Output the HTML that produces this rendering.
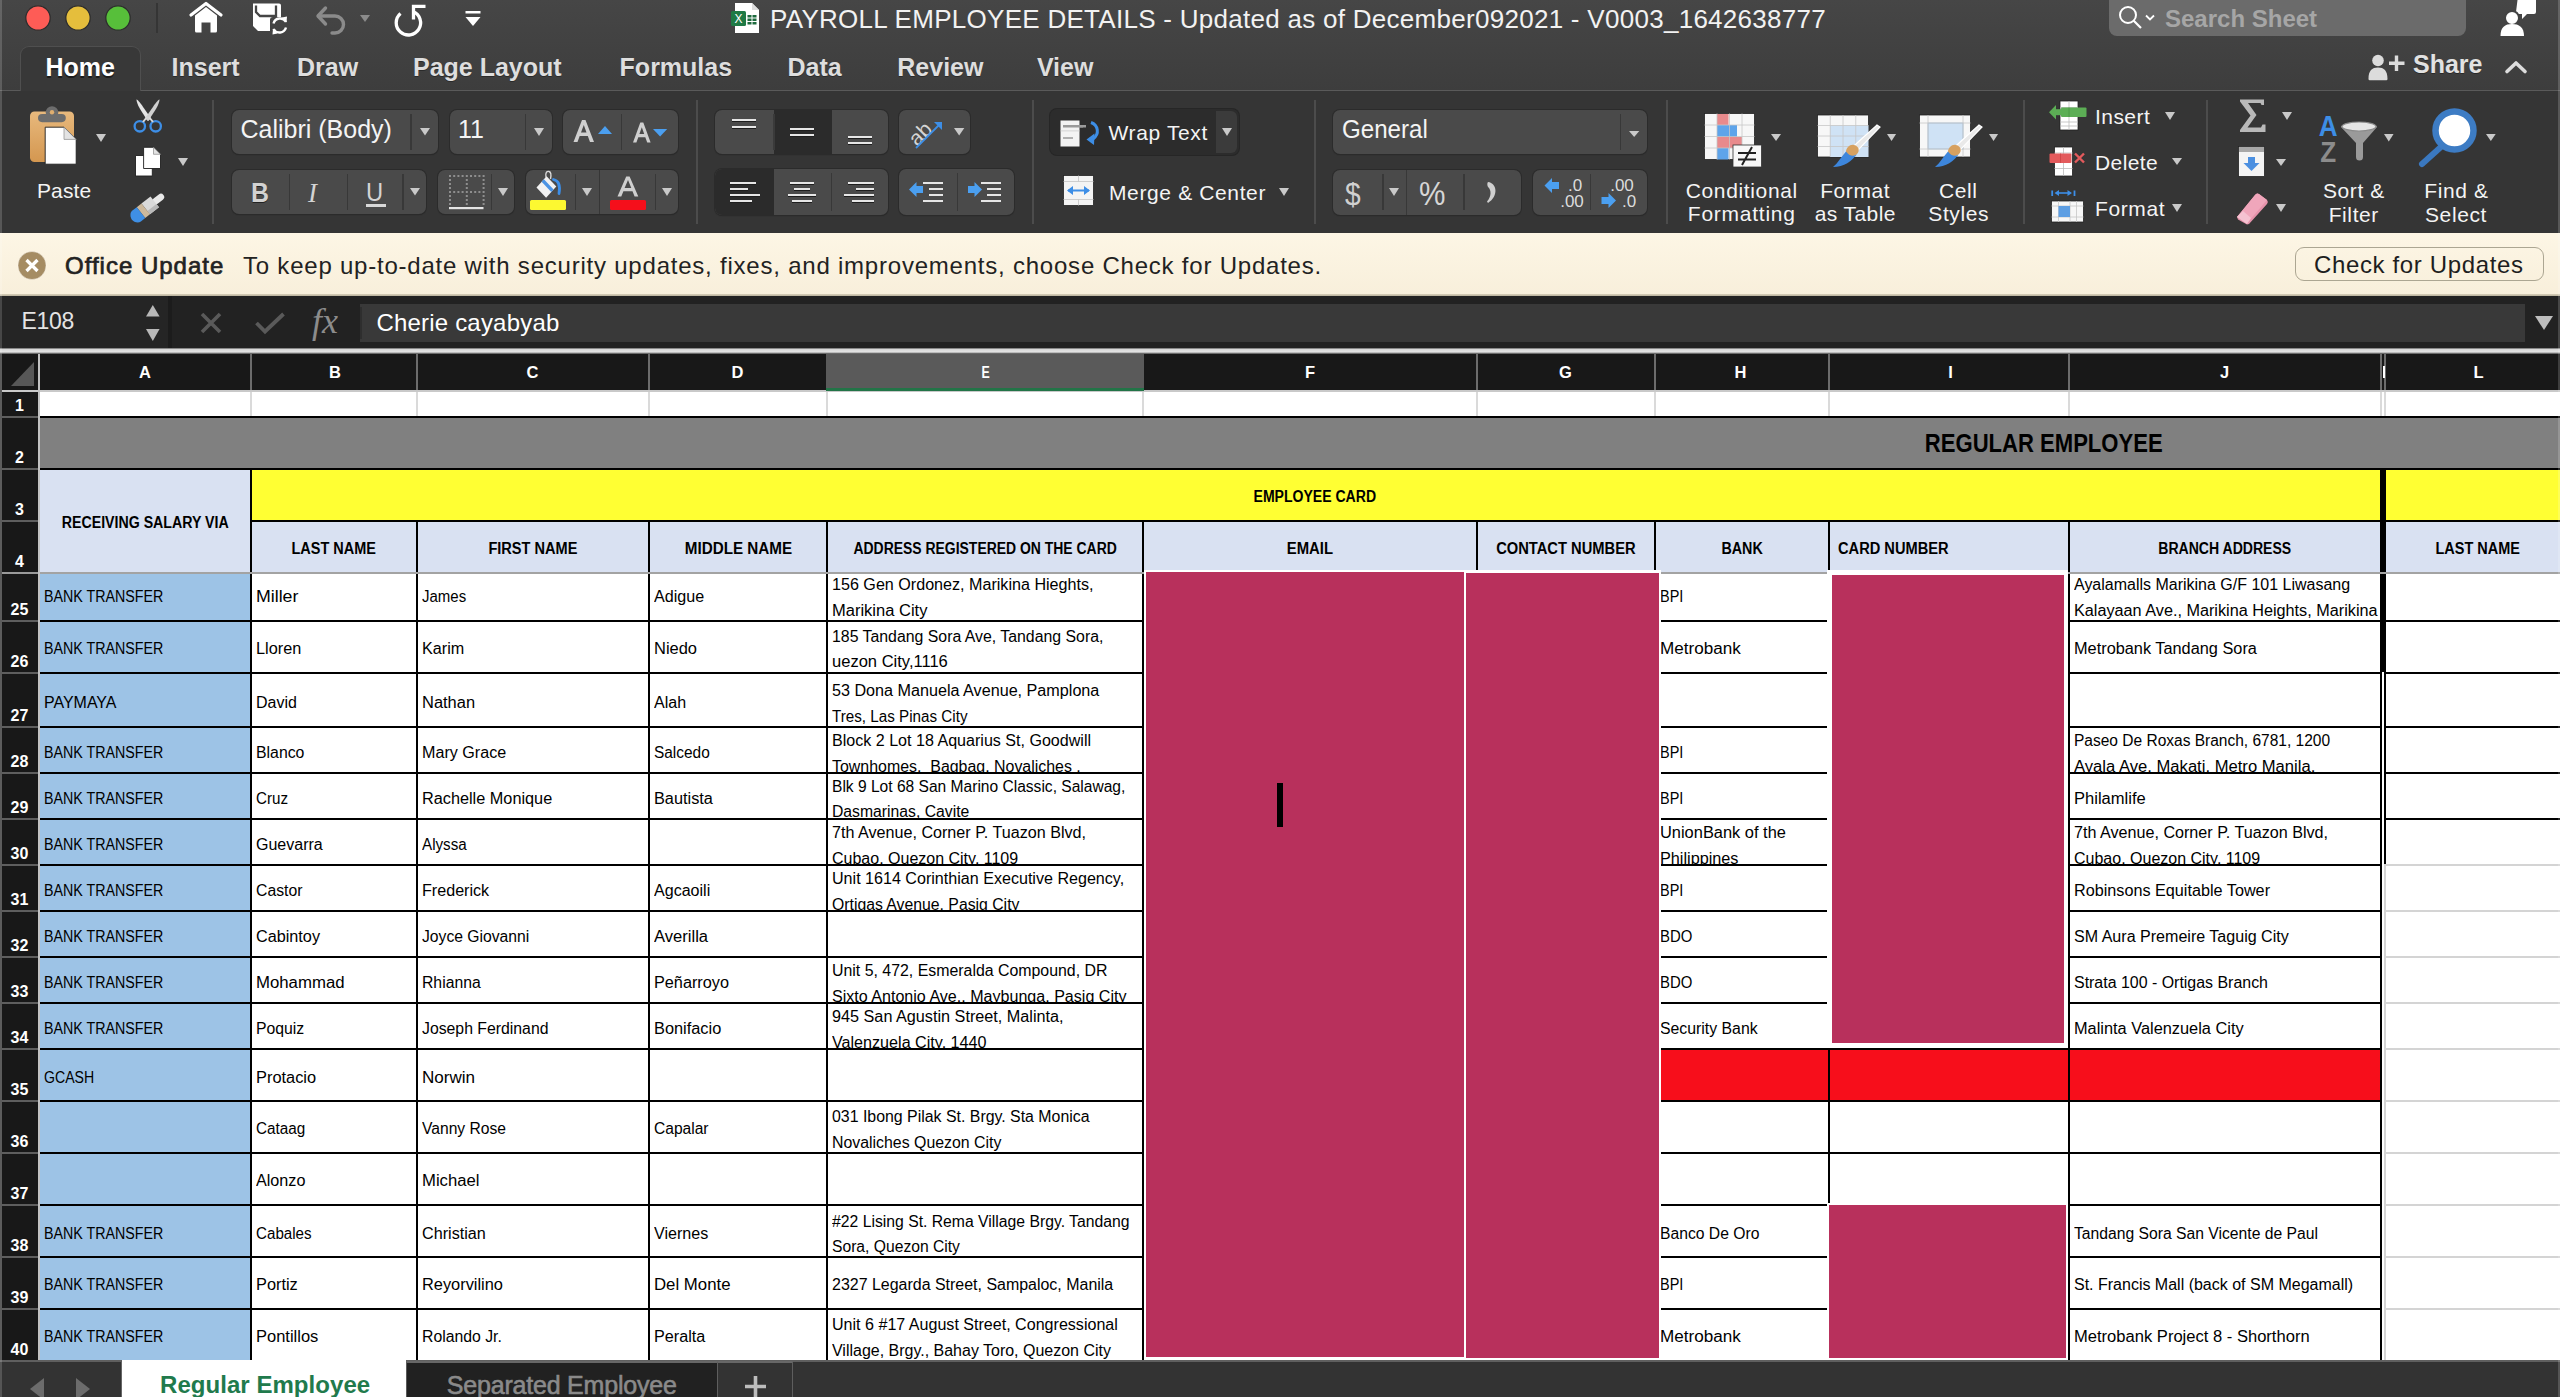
<!DOCTYPE html><html><head><meta charset="utf-8"><title>Excel</title><style>html,body{margin:0;padding:0;width:2560px;height:1397px;overflow:hidden;background:#333;}body{position:relative;font-family:"Liberation Sans",sans-serif;}body div,body svg{position:absolute;}svg{overflow:visible;}</style></head><body><div style="left:0px;top:0px;width:2560px;height:91px;background:linear-gradient(#464646,#3d3d3d);"></div>
<svg style="left:25px;top:5px;" width="26" height="26" viewBox="0 0 26 26"><circle cx="13" cy="13" r="12.2" fill="#fe5c56" stroke="#2e2e2e" stroke-width="1.3"/></svg>
<svg style="left:65px;top:5px;" width="26" height="26" viewBox="0 0 26 26"><circle cx="13" cy="13" r="12.2" fill="#e5be3c" stroke="#2e2e2e" stroke-width="1.3"/></svg>
<svg style="left:105px;top:5px;" width="26" height="26" viewBox="0 0 26 26"><circle cx="13" cy="13" r="12.2" fill="#57bf3a" stroke="#2e2e2e" stroke-width="1.3"/></svg>
<div style="left:156px;top:3px;width:2px;height:30px;background:#353535;"></div>
<svg style="left:188px;top:1px;" width="36" height="33" viewBox="0 0 36 33"><path d="M3 14 L18 2.5 L33 14" fill="none" stroke="#fff" stroke-width="3.2" stroke-linejoin="round" stroke-linecap="round"/><path d="M7 14.5 L18 6 L29 14.5 V30 a1.5 1.5 0 0 1 -1.5 1.5 H22.5 V21.5 H13.5 V31.5 H8.5 a1.5 1.5 0 0 1 -1.5 -1.5Z" fill="#fff"/></svg>
<svg style="left:250px;top:1px;" width="38" height="36" viewBox="0 0 38 36"><path d="M3 2.5 H29 a2 2 0 0 1 2 2 V16 H23 a3 3 0 0 0 -3 3 V30 H8 L3 25 Z" fill="#fff"/><path d="M6 4.5 V11 L10 15 H26 V4.5" fill="none" stroke="#454545" stroke-width="2.3"/><g fill="none" stroke="#fff" stroke-width="2.4"><path d="M23.5 22.5 a6.8 6.8 0 0 1 12.5 -1.5"/><path d="M36 26.5 a6.8 6.8 0 0 1 -12.5 1.5"/></g><path d="M32 16.5 L36.5 21.5 L37 15.5Z" fill="#fff"/><path d="M27.5 32.5 L23 27.5 L22.5 33.5Z" fill="#fff"/></svg>
<svg style="left:314px;top:3px;" width="36" height="32" viewBox="0 0 36 32"><path d="M4.5 13 H21 a8.5 8.5 0 0 1 0 17 H18" fill="none" stroke="#8b8b8b" stroke-width="3.4" stroke-linecap="round"/><path d="M11.5 5 L4 13 L11.5 21" fill="none" stroke="#8b8b8b" stroke-width="3.4" stroke-linecap="round" stroke-linejoin="round"/></svg>
<svg style="left:359.5px;top:15px;" width="10.0" height="7" viewBox="0 0 10.0 7"><path d="M0 0H10.0L5.0 7Z" fill="#8b8b8b"/></svg>
<svg style="left:394px;top:2px;" width="34" height="34" viewBox="0 0 34 34"><path d="M6.5 11.5 A12.2 12.2 0 1 0 19 9.5" fill="none" stroke="#fff" stroke-width="3.3"/><path d="M19.5 17.5 V4.3 H31.5" fill="none" stroke="#fff" stroke-width="3.3"/></svg>
<svg style="left:465px;top:11px;" width="17" height="17" viewBox="0 0 17 17"><rect x="0.5" y="0" width="15" height="2.5" fill="#fff"/><path d="M0.5 6 H15.5 L8 15Z" fill="#fff"/></svg>
<svg style="left:731px;top:2px;" width="29" height="32" viewBox="0 0 29 32"><path d="M4 1 H21 L28 8 V31 H4Z" fill="#fff"/><path d="M21 1 V8 H28" fill="#ddd"/><rect x="0" y="9" width="15" height="15" rx="1.5" fill="#1f7a45"/><text x="7.5" y="21" font-family="Liberation Sans" font-size="12" fill="#fff" text-anchor="middle">X</text><g fill="#1e6b3e"><rect x="16.5" y="13" width="4" height="2.5"/><rect x="21.5" y="13" width="4" height="2.5"/><rect x="16.5" y="16.5" width="4" height="2.5"/><rect x="21.5" y="16.5" width="4" height="2.5"/><rect x="16.5" y="20" width="4" height="2.5"/><rect x="21.5" y="20" width="4" height="2.5"/></g></svg>
<div style="left:770px;top:5.99px;font-family:'Liberation Sans', sans-serif;font-size:26px;line-height:26px;font-weight:400;color:#f2f2f2;letter-spacing:0.28px;white-space:pre;"><span style="display:inline-block;white-space:pre;">PAYROLL EMPLOYEE DETAILS - Updated as of December092021 - V0003_1642638777</span></div>
<div style="left:2109px;top:-8px;width:357px;height:44px;background:#6b6b6b;border-radius:8px;"></div>
<svg style="left:2118px;top:5px;" width="40" height="26" viewBox="0 0 40 26"><circle cx="10" cy="10" r="8" fill="none" stroke="#fff" stroke-width="2"/><path d="M15.5 15.5 L23 23" stroke="#fff" stroke-width="2.2"/><path d="M28 10.5 L32 14.5 L36 10.5" fill="none" stroke="#fff" stroke-width="1.8"/></svg>
<div style="left:2165px;top:7.18px;font-family:'Liberation Sans', sans-serif;font-size:24px;line-height:24px;font-weight:700;color:#a6a6a6;letter-spacing:0px;white-space:pre;"><span style="display:inline-block;white-space:pre;">Search Sheet</span></div>
<svg style="left:2500px;top:0px;" width="38" height="37" viewBox="0 0 38 37"><path d="M18 -4 H34 a2 2 0 0 1 2 2 V12 a2 2 0 0 1 -2 2 H27 L22 19 V14 H18 a2 2 0 0 1 -2 -2 Z" fill="#fff"/><circle cx="12" cy="18" r="7" fill="#fff" stroke="#434343" stroke-width="2"/><path d="M0.5 36 C0.5 27 5 24 12 24 C19 24 24 27 24 36Z" fill="#fff"/></svg>
<div style="left:0px;top:90px;width:2560px;height:1px;background:#5a5a5a;"></div>
<div style="left:20px;top:46px;width:121px;height:46px;background:#383838;border:1px solid #4f4f4f;border-bottom:none;border-radius:9px 9px 0 0;box-sizing:border-box;"></div>
<div style="left:45.5px;top:54.54px;font-family:'Liberation Sans', sans-serif;font-size:25px;line-height:25px;font-weight:700;color:#ffffff;letter-spacing:0px;white-space:pre;text-shadow:0 1.5px 0 #1c1c1c;"><span style="display:inline-block;white-space:pre;">Home</span></div>
<div style="left:171.6px;top:55.04px;font-family:'Liberation Sans', sans-serif;font-size:25px;line-height:25px;font-weight:700;color:#dedede;letter-spacing:0px;white-space:pre;text-shadow:0 1px 0 #2a2a2a;"><span style="display:inline-block;white-space:pre;">Insert</span></div>
<div style="left:297px;top:55.04px;font-family:'Liberation Sans', sans-serif;font-size:25px;line-height:25px;font-weight:700;color:#dedede;letter-spacing:0px;white-space:pre;text-shadow:0 1px 0 #2a2a2a;"><span style="display:inline-block;white-space:pre;">Draw</span></div>
<div style="left:413px;top:55.04px;font-family:'Liberation Sans', sans-serif;font-size:25px;line-height:25px;font-weight:700;color:#dedede;letter-spacing:0px;white-space:pre;text-shadow:0 1px 0 #2a2a2a;"><span style="display:inline-block;white-space:pre;">Page Layout</span></div>
<div style="left:619.6px;top:55.04px;font-family:'Liberation Sans', sans-serif;font-size:25px;line-height:25px;font-weight:700;color:#dedede;letter-spacing:0px;white-space:pre;text-shadow:0 1px 0 #2a2a2a;"><span style="display:inline-block;white-space:pre;">Formulas</span></div>
<div style="left:787.5px;top:55.04px;font-family:'Liberation Sans', sans-serif;font-size:25px;line-height:25px;font-weight:700;color:#dedede;letter-spacing:0px;white-space:pre;text-shadow:0 1px 0 #2a2a2a;"><span style="display:inline-block;white-space:pre;">Data</span></div>
<div style="left:897.3px;top:55.04px;font-family:'Liberation Sans', sans-serif;font-size:25px;line-height:25px;font-weight:700;color:#dedede;letter-spacing:0px;white-space:pre;text-shadow:0 1px 0 #2a2a2a;"><span style="display:inline-block;white-space:pre;">Review</span></div>
<div style="left:1036.9px;top:55.04px;font-family:'Liberation Sans', sans-serif;font-size:25px;line-height:25px;font-weight:700;color:#dedede;letter-spacing:0px;white-space:pre;text-shadow:0 1px 0 #2a2a2a;"><span style="display:inline-block;white-space:pre;">View</span></div>
<svg style="left:2368px;top:53px;" width="38" height="28" viewBox="0 0 38 28"><circle cx="10" cy="7.5" r="5.8" fill="#dcdcdc"/><path d="M0.5 26 a1.2 1.2 0 0 0 1.2 1.2 H18.3 a1.2 1.2 0 0 0 1.2 -1.2 C19.5 17.5 16 14.5 10 14.5 C4 14.5 0.5 17.5 0.5 26Z" fill="#dcdcdc"/><path d="M28.5 2.5 V18 M21 10.2 H36.5" stroke="#dcdcdc" stroke-width="3.4"/></svg>
<div style="left:2413px;top:51.84px;font-family:'Liberation Sans', sans-serif;font-size:25px;line-height:25px;font-weight:700;color:#e2e2e2;letter-spacing:0px;white-space:pre;text-shadow:0 1px 0 #2a2a2a;"><span style="display:inline-block;white-space:pre;">Share</span></div>
<svg style="left:2504px;top:59px;" width="24" height="16" viewBox="0 0 24 16"><path d="M3 12.5 L12 4 L21 12.5" fill="none" stroke="#dcdcdc" stroke-width="3.6" stroke-linecap="round" stroke-linejoin="round"/></svg>
<div style="left:0px;top:91px;width:2560px;height:142px;background:#353535;"></div>
<div style="left:212px;top:100px;width:2px;height:124px;background:#4c4c4c;"></div>
<div style="left:696px;top:100px;width:2px;height:124px;background:#4c4c4c;"></div>
<div style="left:1032px;top:100px;width:2px;height:124px;background:#4c4c4c;"></div>
<div style="left:1314px;top:100px;width:2px;height:124px;background:#4c4c4c;"></div>
<div style="left:1666px;top:100px;width:2px;height:124px;background:#4c4c4c;"></div>
<div style="left:2023px;top:100px;width:2px;height:124px;background:#4c4c4c;"></div>
<div style="left:2206px;top:100px;width:2px;height:124px;background:#4c4c4c;"></div>
<svg style="left:28px;top:100px;" width="52" height="66" viewBox="0 0 52 66"><linearGradient id="cg" x1="0" y1="0" x2="0" y2="1"><stop offset="0" stop-color="#e8b97d"/><stop offset="1" stop-color="#d49750"/></linearGradient><rect x="2" y="11.4" width="44" height="50.6" rx="4.5" fill="url(#cg)"/><circle cx="24" cy="12.5" r="6.3" fill="#6d6d6d"/><rect x="10" y="14" width="27.8" height="8.2" rx="4.1" fill="#6d6d6d"/><circle cx="24" cy="12.3" r="2.2" fill="#dfae6f"/><path d="M17.2 27.2 H36 L48.2 39.4 V64.2 H17.2Z" fill="#fff" stroke="#1e1e1e" stroke-width="0.9"/><path d="M36 27.2 V39.4 H48.2Z" fill="#e3e3e3" stroke="#8a8a8a" stroke-width="0.7"/></svg>
<div style="left:37px;top:180.22px;font-family:'Liberation Sans', sans-serif;font-size:21px;line-height:21px;font-weight:400;color:#f4f4f4;letter-spacing:0.1px;white-space:pre;"><span style="display:inline-block;white-space:pre;">Paste</span></div>
<svg style="left:96px;top:134px;" width="10" height="8" viewBox="0 0 10 8"><path d="M0 0H10L5.0 8Z" fill="#c9c9c9"/></svg>
<svg style="left:132px;top:98px;" width="32" height="36" viewBox="0 0 32 36"><path d="M4.5 1.5 C6 2 8 4 19 20.5 L16 23 C9 13 4.5 6 4.5 1.5Z" fill="#e4e4e4"/><path d="M27.5 1.5 C26 2 24 4 13 20.5 L16 23 C23 13 27.5 6 27.5 1.5Z" fill="#d0d0d0"/><circle cx="7.8" cy="28.3" r="5.2" fill="none" stroke="#3d8ee6" stroke-width="2.3"/><circle cx="23.7" cy="28.3" r="5.2" fill="none" stroke="#3d8ee6" stroke-width="2.3"/><path d="M11 24 L15 19 M21 24 L17 19" stroke="#d8d8d8" stroke-width="2"/></svg>
<svg style="left:134px;top:145px;" width="30" height="34" viewBox="0 0 30 34"><path d="M1.5 10.5 H18.3 V31 H1.5Z" fill="#fff" stroke="#1e1e1e" stroke-width="0.9"/><path d="M9.6 2.3 H19.5 L26.5 9.3 V23.5 H9.6Z" fill="#fff" stroke="#1e1e1e" stroke-width="0.9"/><path d="M19.5 2.3 V9.3 H26.5Z" fill="#e3e3e3" stroke="#8a8a8a" stroke-width="0.7"/></svg>
<svg style="left:178px;top:158px;" width="10" height="8" viewBox="0 0 10 8"><path d="M0 0H10L5.0 8Z" fill="#c9c9c9"/></svg>
<svg style="left:127px;top:188px;" width="40" height="40" viewBox="0 0 40 40"><g transform="translate(20.5 19.5) rotate(52) scale(0.92)"><rect x="-3.6" y="-22" width="7.2" height="14" rx="3.6" fill="#e9e9e9"/><path d="M-7.5 -10 H7.5 V2.5 H-7.5Z" fill="#dadada"/><path d="M3 -10 H7.5 V2.5 H3Z" fill="#b9b9b9"/><path d="M-7.5 2.5 H7.5 V9 H-7.5Z" fill="#cdb99c"/><path d="M-7.5 9 H7.5 V15 C7.5 19 3 21.5 0 21.5 C-3 21.5 -7.5 19 -7.5 15Z" fill="#3f8fe5"/></g></svg>
<div style="left:231.5px;top:109.5px;width:206.5px;height:44.5px;background:#4a4a4a;border-radius:7px;box-shadow:0 0 0 1px #2b2b2b, 0 1px 1px #262626;"></div>
<div style="left:410px;top:114px;width:1.5px;height:36px;background:#383838;"></div>
<svg style="left:419.5px;top:128px;" width="10.0" height="7.5" viewBox="0 0 10.0 7.5"><path d="M0 0H10.0L5.0 7.5Z" fill="#c9c9c9"/></svg>
<div style="left:240.5px;top:117.34px;font-family:'Liberation Sans', sans-serif;font-size:25px;line-height:25px;font-weight:400;color:#f4f4f4;letter-spacing:0px;white-space:pre;"><span style="display:inline-block;white-space:pre;">Calibri (Body)</span></div>
<div style="left:449.6px;top:109.7px;width:102.39999999999998px;height:44.7px;background:#4a4a4a;border-radius:7px;box-shadow:0 0 0 1px #2b2b2b, 0 1px 1px #262626;"></div>
<div style="left:524.5px;top:114px;width:1.5px;height:36px;background:#383838;"></div>
<svg style="left:534px;top:128px;" width="10" height="8" viewBox="0 0 10 8"><path d="M0 0H10L5.0 8Z" fill="#c9c9c9"/></svg>
<div style="left:458px;top:116.84px;font-family:'Liberation Sans', sans-serif;font-size:25px;line-height:25px;font-weight:400;color:#f4f4f4;letter-spacing:0px;white-space:pre;"><span style="display:inline-block;white-space:pre;">11</span></div>
<div style="left:563.4px;top:109.7px;width:114.80000000000007px;height:44.7px;background:#4a4a4a;border-radius:7px;box-shadow:0 0 0 1px #2b2b2b, 0 1px 1px #262626;"></div>
<div style="left:620.5px;top:114px;width:1.5px;height:36px;background:#383838;"></div>
<svg style="left:572px;top:118px;" width="24" height="26" viewBox="0 0 24 26"><path d="M1.5 24 L10 2 H13.5 L22 24 H18 L15.8 18 H7.7 L5.5 24Z M9 14.5 H14.5 L11.8 7Z" fill="#cfcfcf"/></svg>
<svg style="left:598px;top:126px;" width="14" height="8" viewBox="0 0 14 8"><path d="M0 8H14L7.0 0Z" fill="#4b9ff0"/></svg>
<svg style="left:632px;top:121px;" width="20" height="23" viewBox="0 0 20 23"><path d="M1 21.5 L8.3 1.5 H11.3 L18.6 21.5 H15.2 L13.3 16.2 H6.3 L4.4 21.5Z M7.4 13 H12.2 L9.8 6.3Z" fill="#cfcfcf"/></svg>
<svg style="left:652.8px;top:129px;" width="14.200000000000045" height="7.599999999999994" viewBox="0 0 14.200000000000045 7.599999999999994"><path d="M0 0H14.200000000000045L7.100000000000023 7.599999999999994Z" fill="#4b9ff0"/></svg>
<div style="left:231.5px;top:169.5px;width:194.5px;height:44.5px;background:#4a4a4a;border-radius:7px;box-shadow:0 0 0 1px #2b2b2b, 0 1px 1px #262626;"></div>
<div style="left:288.5px;top:174px;width:1.5px;height:36px;background:#383838;"></div>
<div style="left:346.5px;top:174px;width:1.5px;height:36px;background:#383838;"></div>
<div style="left:402px;top:174px;width:1.5px;height:36px;background:#383838;"></div>
<div style="left:251px;top:179.64px;font-family:'Liberation Sans', sans-serif;font-size:27px;line-height:27px;font-weight:700;color:#d2d2d2;letter-spacing:0px;white-space:pre;text-shadow:0 1px 0 #222;"><span style="display:inline-block;white-space:pre;transform:scaleX(0.92);transform-origin:left 50%;">B</span></div>
<div style="left:308px;top:179.64px;font-family:'Liberation Serif', serif;font-size:27px;line-height:27px;font-weight:400;color:#d4d4d4;letter-spacing:0px;white-space:pre;font-style:italic;"><span style="display:inline-block;white-space:pre;">I</span></div>
<div style="left:365.5px;top:180.34px;font-family:'Liberation Sans', sans-serif;font-size:25px;line-height:25px;font-weight:400;color:#d4d4d4;letter-spacing:0px;white-space:pre;"><span style="display:inline-block;white-space:pre;transform:scaleX(0.95);transform-origin:left 50%;">U</span></div>
<div style="left:366px;top:204px;width:20px;height:3px;background:#d8d8d8;"></div>
<svg style="left:409.5px;top:188px;" width="10.0" height="7.5" viewBox="0 0 10.0 7.5"><path d="M0 0H10.0L5.0 7.5Z" fill="#c9c9c9"/></svg>
<div style="left:438px;top:170px;width:76px;height:44px;background:#4a4a4a;border-radius:7px;box-shadow:0 0 0 1px #2b2b2b, 0 1px 1px #262626;"></div>
<svg style="left:449px;top:175px;" width="36" height="36" viewBox="0 0 36 36"><g fill="#8e8e8e"><rect x="0.0" y="0" width="2" height="2"/><rect x="4.2" y="0" width="2" height="2"/><rect x="8.4" y="0" width="2" height="2"/><rect x="12.600000000000001" y="0" width="2" height="2"/><rect x="16.8" y="0" width="2" height="2"/><rect x="21.0" y="0" width="2" height="2"/><rect x="25.200000000000003" y="0" width="2" height="2"/><rect x="29.400000000000002" y="0" width="2" height="2"/><rect x="33.6" y="0" width="2" height="2"/><rect x="0.0" y="4" width="2" height="2"/><rect x="16.8" y="4" width="2" height="2"/><rect x="33.6" y="4" width="2" height="2"/><rect x="0.0" y="8" width="2" height="2"/><rect x="16.8" y="8" width="2" height="2"/><rect x="33.6" y="8" width="2" height="2"/><rect x="0.0" y="12" width="2" height="2"/><rect x="16.8" y="12" width="2" height="2"/><rect x="33.6" y="12" width="2" height="2"/><rect x="0.0" y="16" width="2" height="2"/><rect x="4.2" y="16" width="2" height="2"/><rect x="8.4" y="16" width="2" height="2"/><rect x="12.600000000000001" y="16" width="2" height="2"/><rect x="16.8" y="16" width="2" height="2"/><rect x="21.0" y="16" width="2" height="2"/><rect x="25.200000000000003" y="16" width="2" height="2"/><rect x="29.400000000000002" y="16" width="2" height="2"/><rect x="33.6" y="16" width="2" height="2"/><rect x="0.0" y="20" width="2" height="2"/><rect x="16.8" y="20" width="2" height="2"/><rect x="33.6" y="20" width="2" height="2"/><rect x="0.0" y="24" width="2" height="2"/><rect x="16.8" y="24" width="2" height="2"/><rect x="33.6" y="24" width="2" height="2"/><rect x="0.0" y="28" width="2" height="2"/><rect x="16.8" y="28" width="2" height="2"/><rect x="33.6" y="28" width="2" height="2"/></g><rect x="0" y="32" width="34.5" height="2.2" fill="#e4e4e4"/></svg>
<div style="left:490.5px;top:174px;width:1.5px;height:36px;background:#383838;"></div>
<svg style="left:498px;top:188px;" width="10" height="8" viewBox="0 0 10 8"><path d="M0 0H10L5.0 8Z" fill="#c9c9c9"/></svg>
<div style="left:525.8px;top:170px;width:152.4000000000001px;height:44px;background:#4a4a4a;border-radius:7px;box-shadow:0 0 0 1px #2b2b2b, 0 1px 1px #262626;"></div>
<svg style="left:532px;top:170px;" width="32" height="30" viewBox="0 0 32 30"><path d="M14 7.5 C13 2.5 15 1 17 1.5 C19 2 19.5 4 18.5 9" fill="none" stroke="#dadada" stroke-width="1.4"/><path d="M4.5 17.5 L14.6 6.3 L24.3 16.6 L14.1 27.8Z" fill="#f2f2f2"/><path d="M9.6 11.7 L11.9 9.2 L21.6 19.5 L19.3 22Z" fill="#4b93e4"/><path d="M21.5 9.5 C26.5 10.5 28.5 15 27 23.5" fill="none" stroke="#3d8ee6" stroke-width="2.8" stroke-linecap="round"/></svg>
<div style="left:530px;top:200px;width:36px;height:10px;background:#fcf831;border-radius:1.5px;"></div>
<div style="left:574.8px;top:174px;width:1.5px;height:36px;background:#383838;"></div>
<svg style="left:582px;top:188px;" width="10" height="8" viewBox="0 0 10 8"><path d="M0 0H10L5.0 8Z" fill="#c9c9c9"/></svg>
<div style="left:598.5px;top:170px;width:1.5px;height:44px;background:#363636;"></div>
<svg style="left:616px;top:175px;" width="24" height="23" viewBox="0 0 24 23"><path d="M1.5 21.5 L10.2 1.5 H13.6 L22.3 21.5 H18.6 L16.5 16.3 H7.4 L5.3 21.5Z M8.6 13 H15.3 L12 5Z" fill="#cfcfcf"/></svg>
<div style="left:610px;top:200px;width:35.700000000000045px;height:10px;background:#f50f1b;border-radius:1.5px;"></div>
<div style="left:654.5px;top:174px;width:1.5px;height:36px;background:#383838;"></div>
<svg style="left:662px;top:188px;" width="10" height="8" viewBox="0 0 10 8"><path d="M0 0H10L5.0 8Z" fill="#c9c9c9"/></svg>
<div style="left:715px;top:109.6px;width:173px;height:44.400000000000006px;background:#4a4a4a;border-radius:7px;box-shadow:0 0 0 1px #2b2b2b, 0 1px 1px #262626;"></div>
<div style="left:774px;top:109.6px;width:58px;height:44.400000000000006px;background:#2b2b2b;"></div>
<div style="left:773px;top:114px;width:1.5px;height:36px;background:#3a3a3a;"></div>
<div style="left:732px;top:119.2px;width:24px;height:2.0px;background:#e6e6e6;box-shadow:0 1px 0 #1e1e1e;"></div>
<div style="left:732px;top:125.9px;width:24px;height:2.0px;background:#e6e6e6;box-shadow:0 1px 0 #1e1e1e;"></div>
<div style="left:790px;top:127.9px;width:24px;height:2.0px;background:#e6e6e6;box-shadow:0 1px 0 #1e1e1e;"></div>
<div style="left:790px;top:133.8px;width:24px;height:2.0px;background:#e6e6e6;box-shadow:0 1px 0 #1e1e1e;"></div>
<div style="left:848px;top:135.8px;width:24px;height:2.0px;background:#e6e6e6;box-shadow:0 1px 0 #1e1e1e;"></div>
<div style="left:848px;top:141.8px;width:24px;height:2.0px;background:#e6e6e6;box-shadow:0 1px 0 #1e1e1e;"></div>
<div style="left:899px;top:109.6px;width:71px;height:44.400000000000006px;background:#4a4a4a;border-radius:7px;box-shadow:0 0 0 1px #2b2b2b, 0 1px 1px #262626;"></div>
<svg style="left:910px;top:116px;" width="38" height="34" viewBox="0 0 38 34"><text x="0" y="0" font-family="Liberation Sans" font-size="21" fill="#d5d5d5" transform="translate(7 31) rotate(-45)">ab</text><path d="M6 32 L30 8" stroke="#3d8ee6" stroke-width="1.8"/><path d="M24 6 H32 V14Z" fill="#3d8ee6"/></svg>
<svg style="left:953.7px;top:128px;" width="10.299999999999955" height="7.5" viewBox="0 0 10.299999999999955 7.5"><path d="M0 0H10.299999999999955L5.149999999999977 7.5Z" fill="#c9c9c9"/></svg>
<div style="left:714.6px;top:168.7px;width:173.39999999999998px;height:46.30000000000001px;background:#4a4a4a;border-radius:7px;box-shadow:0 0 0 1px #2b2b2b, 0 1px 1px #262626;"></div>
<div style="left:714.6px;top:168.7px;width:59.39999999999998px;height:46.30000000000001px;background:#2b2b2b;border-radius:7px 0 0 7px;"></div>
<div style="left:830.5px;top:173px;width:1.5px;height:38px;background:#383838;"></div>
<div style="left:730px;top:181.6px;width:26px;height:2.0px;background:#e6e6e6;box-shadow:0 1px 0 #1e1e1e;"></div>
<div style="left:730px;top:187.6px;width:18px;height:2.0px;background:#e6e6e6;box-shadow:0 1px 0 #1e1e1e;"></div>
<div style="left:730px;top:193.6px;width:30px;height:2.0px;background:#e6e6e6;box-shadow:0 1px 0 #1e1e1e;"></div>
<div style="left:730px;top:199.8px;width:22px;height:2.0px;background:#e6e6e6;box-shadow:0 1px 0 #1e1e1e;"></div>
<div style="left:790.0px;top:181.6px;width:24.0px;height:2.0px;background:#e6e6e6;box-shadow:0 1px 0 #1e1e1e;"></div>
<div style="left:794.0px;top:187.6px;width:16.0px;height:2.0px;background:#e6e6e6;box-shadow:0 1px 0 #1e1e1e;"></div>
<div style="left:788.0px;top:193.6px;width:28.0px;height:2.0px;background:#e6e6e6;box-shadow:0 1px 0 #1e1e1e;"></div>
<div style="left:792.0px;top:199.8px;width:20.0px;height:2.0px;background:#e6e6e6;box-shadow:0 1px 0 #1e1e1e;"></div>
<div style="left:848px;top:181.6px;width:26px;height:2.0px;background:#e6e6e6;box-shadow:0 1px 0 #1e1e1e;"></div>
<div style="left:856px;top:187.6px;width:18px;height:2.0px;background:#e6e6e6;box-shadow:0 1px 0 #1e1e1e;"></div>
<div style="left:844px;top:193.6px;width:30px;height:2.0px;background:#e6e6e6;box-shadow:0 1px 0 #1e1e1e;"></div>
<div style="left:852px;top:199.8px;width:22px;height:2.0px;background:#e6e6e6;box-shadow:0 1px 0 #1e1e1e;"></div>
<div style="left:899px;top:168.7px;width:115px;height:46.30000000000001px;background:#4a4a4a;border-radius:7px;box-shadow:0 0 0 1px #2b2b2b, 0 1px 1px #262626;"></div>
<div style="left:956.5px;top:173px;width:1.5px;height:38px;background:#383838;"></div>
<svg style="left:908px;top:178px;" width="38" height="26" viewBox="0 0 38 26"><path d="M1 11.5 L8.5 4 V8 H15 V15 H8.5 V19Z" fill="#4b9ff0"/><g fill="#e6e6e6"><rect x="15" y="4" width="20" height="2"/><rect x="21" y="10" width="14" height="2"/><rect x="21" y="16" width="14" height="2"/><rect x="15" y="22" width="20" height="2"/></g></svg>
<svg style="left:966px;top:178px;" width="38" height="26" viewBox="0 0 38 26"><path d="M16 11.5 L8.5 4 V8 H2 V15 H8.5 V19Z" fill="#4b9ff0"/><g fill="#e6e6e6"><rect x="15" y="4" width="20" height="2"/><rect x="21" y="10" width="14" height="2"/><rect x="21" y="16" width="14" height="2"/><rect x="15" y="22" width="20" height="2"/></g></svg>
<div style="left:1050.4px;top:108.7px;width:188.2px;height:46.5px;background:#2c2c2c;border-radius:7px;box-shadow:0 0 0 1px #262626;"></div>
<div style="left:1215.6px;top:111px;width:21.40000000000009px;height:42px;background:#3b3b3b;border-radius:0 6px 6px 0;"></div>
<svg style="left:1060px;top:120px;" width="42" height="28" viewBox="0 0 42 28"><rect x="0.5" y="0.5" width="19" height="26" fill="#f3f3f3"/><rect x="3" y="5" width="20" height="2.5" fill="#9a9a9a"/><rect x="20" y="5" width="6" height="2.5" fill="#9a9a9a"/><rect x="3" y="17" width="10" height="2" fill="#b0b0b0"/><rect x="0.5" y="10.5" width="19" height="0.8" fill="#ccc"/><path d="M31 2.5 C38 5 40 14 33 19" fill="none" stroke="#3d8ee6" stroke-width="3"/><path d="M26.5 19.5 L34.5 13.5 L34 25Z" fill="#3d8ee6"/></svg>
<div style="left:1108.4px;top:122.12px;font-family:'Liberation Sans', sans-serif;font-size:21px;line-height:21px;font-weight:400;color:#f4f4f4;letter-spacing:0.65px;white-space:pre;"><span style="display:inline-block;white-space:pre;">Wrap Text</span></div>
<svg style="left:1222px;top:128px;" width="10" height="8" viewBox="0 0 10 8"><path d="M0 0H10L5.0 8Z" fill="#c9c9c9"/></svg>
<svg style="left:1063px;top:175px;" width="32" height="33" viewBox="0 0 32 33"><rect x="0.5" y="0.5" width="30" height="30" fill="#f4f4f4" stroke="#222" stroke-width="0.8"/><path d="M0.5 6.5 H30.5 M0.5 24.5 H30.5 M15.5 0.5 V6.5 M15.5 24.5 V30.5" stroke="#c4c4c4" stroke-width="0.8"/><path d="M5 15.5 H26" stroke="#3d8ee6" stroke-width="2"/><path d="M4 15.5 L10 11 V20Z M27 15.5 L21 11 V20Z" fill="#3d8ee6"/></svg>
<div style="left:1109px;top:181.52px;font-family:'Liberation Sans', sans-serif;font-size:21px;line-height:21px;font-weight:400;color:#f4f4f4;letter-spacing:0.63px;white-space:pre;"><span style="display:inline-block;white-space:pre;">Merge &amp; Center</span></div>
<svg style="left:1279px;top:188px;" width="10" height="8" viewBox="0 0 10 8"><path d="M0 0H10L5.0 8Z" fill="#c9c9c9"/></svg>
<div style="left:1332.7px;top:109.8px;width:314.29999999999995px;height:44.2px;background:#4a4a4a;border-radius:7px;box-shadow:0 0 0 1px #2b2b2b, 0 1px 1px #262626;"></div>
<div style="left:1619.5px;top:114px;width:1.5px;height:36px;background:#383838;"></div>
<svg style="left:1628.7px;top:131px;" width="10.299999999999955" height="6" viewBox="0 0 10.299999999999955 6"><path d="M0 0H10.299999999999955L5.149999999999977 6Z" fill="#c9c9c9"/></svg>
<div style="left:1341.8px;top:116.74px;font-family:'Liberation Sans', sans-serif;font-size:25px;line-height:25px;font-weight:400;color:#f4f4f4;letter-spacing:0px;white-space:pre;"><span style="display:inline-block;white-space:pre;transform:scaleX(0.965);transform-origin:left 50%;">General</span></div>
<div style="left:1332.7px;top:169.5px;width:188.29999999999995px;height:45.0px;background:#4a4a4a;border-radius:7px;box-shadow:0 0 0 1px #2b2b2b, 0 1px 1px #262626;"></div>
<div style="left:1345px;top:177.91px;font-family:'Liberation Sans', sans-serif;font-size:32px;line-height:32px;font-weight:400;color:#d0d0d0;letter-spacing:0px;white-space:pre;"><span style="display:inline-block;white-space:pre;transform:scaleX(0.88);transform-origin:left 50%;">$</span></div>
<div style="left:1382px;top:174px;width:1.5px;height:36px;background:#383838;"></div>
<svg style="left:1389px;top:188px;" width="10" height="8" viewBox="0 0 10 8"><path d="M0 0H10L5.0 8Z" fill="#c9c9c9"/></svg>
<div style="left:1405.5px;top:169.5px;width:1.5px;height:45.0px;background:#383838;"></div>
<div style="left:1419px;top:177.07px;font-family:'Liberation Sans', sans-serif;font-size:33px;line-height:33px;font-weight:400;color:#d6d6d6;letter-spacing:0px;white-space:pre;"><span style="display:inline-block;white-space:pre;transform:scaleX(0.9);transform-origin:left 50%;">%</span></div>
<div style="left:1463.2px;top:174px;width:1.5px;height:36px;background:#383838;"></div>
<svg style="left:1484px;top:180px;" width="18" height="26" viewBox="0 0 18 26"><path d="M4 2 C13 3 15 16 4 23 L3 21.5 C8 16 7 10 4.5 7.5 C3 6 3 3 4 2Z" fill="#d0d0d0"/></svg>
<div style="left:1533px;top:169.5px;width:114px;height:45.0px;background:#4a4a4a;border-radius:7px;box-shadow:0 0 0 1px #2b2b2b, 0 1px 1px #262626;"></div>
<div style="left:1589.8px;top:174px;width:1.5px;height:36px;background:#383838;"></div>
<svg style="left:1544px;top:176px;" width="42" height="34" viewBox="0 0 42 34"><path d="M0.5 9.5 L8 2 V6 H15 V13 H8 V17Z" fill="#4b9ff0"/><text x="31" y="15" font-family="Liberation Sans" font-size="17" fill="#dcdcdc" text-anchor="middle">.0</text><text x="28" y="31" font-family="Liberation Sans" font-size="17" fill="#dcdcdc" text-anchor="middle">.00</text></svg>
<svg style="left:1600px;top:176px;" width="42" height="34" viewBox="0 0 42 34"><text x="22" y="15" font-family="Liberation Sans" font-size="17" fill="#dcdcdc" text-anchor="middle">.00</text><path d="M16 24.5 L8.5 17 V21 H1.5 V28 H8.5 V32Z" fill="#4b9ff0"/><text x="29" y="31" font-family="Liberation Sans" font-size="17" fill="#dcdcdc" text-anchor="middle">.0</text></svg>
<svg style="left:1703px;top:112px;" width="60" height="56" viewBox="0 0 60 56"><rect x="1.5" y="1.5" width="50" height="46" fill="#f7f7f7" stroke="#222" stroke-width="0.8"/><rect x="14" y="2" width="11.5" height="11" fill="#e88a8c"/><rect x="14" y="13" width="20" height="12" fill="#5ea4ea"/><rect x="14" y="25" width="25" height="11" fill="#e88a8c"/><rect x="14" y="36" width="11.5" height="11.5" fill="#5ea4ea"/><path d="M14.0 1.5 V47.5" stroke="#c7c7c7" stroke-width="0.8"/><path d="M26.5 1.5 V47.5" stroke="#c7c7c7" stroke-width="0.8"/><path d="M39.0 1.5 V47.5" stroke="#c7c7c7" stroke-width="0.8"/><path d="M1.5 13.0 H51.5" stroke="#c7c7c7" stroke-width="0.8"/><path d="M1.5 24.5 H51.5" stroke="#c7c7c7" stroke-width="0.8"/><path d="M1.5 36.0 H51.5" stroke="#c7c7c7" stroke-width="0.8"/><rect x="30" y="33" width="28.5" height="22" fill="#f8f8f8" stroke="#333" stroke-width="0.8"/><path d="M35 41 H53 M35 47.5 H53 M39 53 L49 35" stroke="#222" stroke-width="2"/></svg>
<svg style="left:1771px;top:134px;" width="10" height="7" viewBox="0 0 10 7"><path d="M0 0H10L5.0 7Z" fill="#c9c9c9"/></svg>
<div style="left:1741.8px;width:0;display:flex;justify-content:center;top:179.92px;font-family:'Liberation Sans', sans-serif;font-size:21px;line-height:21px;font-weight:400;color:#f4f4f4;letter-spacing:0.65px;white-space:pre;"><span style="display:inline-block;white-space:pre;">Conditional</span></div>
<div style="left:1741.8px;width:0;display:flex;justify-content:center;top:203.22px;font-family:'Liberation Sans', sans-serif;font-size:21px;line-height:21px;font-weight:400;color:#f4f4f4;letter-spacing:0.75px;white-space:pre;"><span style="display:inline-block;white-space:pre;">Formatting</span></div>
<svg style="left:1816px;top:113px;" width="66" height="57" viewBox="0 0 66 57"><rect x="1.5" y="2" width="51" height="42" fill="#f7f7f7" stroke="#222" stroke-width="0.8"/><rect x="14" y="12.5" width="38.5" height="31.5" fill="#cfe2f5"/><path d="M14.25 2 V44" stroke="#c7c7c7" stroke-width="0.8"/><path d="M27.0 2 V44" stroke="#c7c7c7" stroke-width="0.8"/><path d="M39.75 2 V44" stroke="#c7c7c7" stroke-width="0.8"/><path d="M1.5 12.5 H52.5" stroke="#c7c7c7" stroke-width="0.8"/><path d="M1.5 23.0 H52.5" stroke="#c7c7c7" stroke-width="0.8"/><path d="M1.5 33.5 H52.5" stroke="#c7c7c7" stroke-width="0.8"/><path d="M64 14 C60 18 48 31 42 37 L38 33 C44 27 57 16 61 12Z" fill="#e9e9e9" stroke="#fff" stroke-width="1.2"/><path d="M38 32 C43 33 44 38 41 41 C36 45 30 43 30 39 C30 35 34 31 38 32Z" fill="#d7a160"/><path d="M30 38.5 C33 43 38 44 41 41 C36 48 28 54 17 54 C22 50 25 44 30 38.5Z" fill="#3d86dc"/></svg>
<svg style="left:1886.6px;top:134px;" width="9.100000000000136" height="7" viewBox="0 0 9.100000000000136 7"><path d="M0 0H9.100000000000136L4.550000000000068 7Z" fill="#c9c9c9"/></svg>
<div style="left:1855.2px;width:0;display:flex;justify-content:center;top:179.92px;font-family:'Liberation Sans', sans-serif;font-size:21px;line-height:21px;font-weight:400;color:#f4f4f4;letter-spacing:0.6px;white-space:pre;"><span style="display:inline-block;white-space:pre;">Format</span></div>
<div style="left:1855.3px;width:0;display:flex;justify-content:center;top:203.22px;font-family:'Liberation Sans', sans-serif;font-size:21px;line-height:21px;font-weight:400;color:#f4f4f4;letter-spacing:0.4px;white-space:pre;"><span style="display:inline-block;white-space:pre;">as Table</span></div>
<svg style="left:1918px;top:113px;" width="66" height="57" viewBox="0 0 66 57"><rect x="1.5" y="2" width="51" height="42" fill="#f7f7f7" stroke="#222" stroke-width="0.8"/><rect x="10" y="10" width="35" height="26" fill="#cfe2f5" stroke="#9fbbd8" stroke-width="0.8"/><path d="M10 2 V44 M45 2 V44 M1.5 10 H52.5 M1.5 36 H52.5" stroke="#c7c7c7" stroke-width="0.8"/><path d="M64 14 C60 18 48 31 42 37 L38 33 C44 27 57 16 61 12Z" fill="#e9e9e9" stroke="#fff" stroke-width="1.2"/><path d="M38 32 C43 33 44 38 41 41 C36 45 30 43 30 39 C30 35 34 31 38 32Z" fill="#d7a160"/><path d="M30 38.5 C33 43 38 44 41 41 C36 48 28 54 17 54 C22 50 25 44 30 38.5Z" fill="#3d86dc"/></svg>
<svg style="left:1988.6px;top:134px;" width="9.100000000000136" height="7" viewBox="0 0 9.100000000000136 7"><path d="M0 0H9.100000000000136L4.550000000000068 7Z" fill="#c9c9c9"/></svg>
<div style="left:1958.3px;width:0;display:flex;justify-content:center;top:179.92px;font-family:'Liberation Sans', sans-serif;font-size:21px;line-height:21px;font-weight:400;color:#f4f4f4;letter-spacing:0.6px;white-space:pre;"><span style="display:inline-block;white-space:pre;">Cell</span></div>
<div style="left:1958.7px;width:0;display:flex;justify-content:center;top:203.22px;font-family:'Liberation Sans', sans-serif;font-size:21px;line-height:21px;font-weight:400;color:#f4f4f4;letter-spacing:0.6px;white-space:pre;"><span style="display:inline-block;white-space:pre;">Styles</span></div>
<svg style="left:2048px;top:100px;" width="40" height="32" viewBox="0 0 40 32"><rect x="12" y="1" width="18" height="29" fill="#fff" stroke="#222" stroke-width="0.8"/><path d="M12 7.5 H30 M12 22 H30 M12 26 H30 M21 1 V30" stroke="#bbb" stroke-width="0.8"/><rect x="13" y="7.5" width="25.5" height="9.5" rx="1" fill="#5cae55"/><path d="M21 7.5 V17" stroke="#4a9444" stroke-width="0.8"/><path d="M1 12.2 L8 5 V19.5Z" fill="#5cae55"/><rect x="7" y="9.2" width="7" height="6" fill="#5cae55"/></svg>
<div style="left:2095px;top:105.72px;font-family:'Liberation Sans', sans-serif;font-size:21px;line-height:21px;font-weight:400;color:#f4f4f4;letter-spacing:0.45px;white-space:pre;"><span style="display:inline-block;white-space:pre;">Insert</span></div>
<svg style="left:2165px;top:112px;" width="10" height="8" viewBox="0 0 10 8"><path d="M0 0H10L5.0 8Z" fill="#c9c9c9"/></svg>
<svg style="left:2048px;top:146px;" width="40" height="32" viewBox="0 0 40 32"><rect x="6.5" y="1" width="18" height="29" fill="#fff" stroke="#222" stroke-width="0.8"/><path d="M6.5 7 H24.5 M6.5 22.5 H24.5 M15.5 1 V30" stroke="#bbb" stroke-width="0.8"/><rect x="1.5" y="7.5" width="22" height="9.5" rx="1" fill="#e35a5c"/><path d="M12.5 7.5 V17" stroke="#c44" stroke-width="0.8"/><path d="M27 7.5 L36 16.5 M36 7.5 L27 16.5" stroke="#e35a5c" stroke-width="2.4"/></svg>
<div style="left:2095px;top:152.22px;font-family:'Liberation Sans', sans-serif;font-size:21px;line-height:21px;font-weight:400;color:#f4f4f4;letter-spacing:0.4px;white-space:pre;"><span style="display:inline-block;white-space:pre;">Delete</span></div>
<svg style="left:2172px;top:158px;" width="10" height="7" viewBox="0 0 10 7"><path d="M0 0H10L5.0 7Z" fill="#c9c9c9"/></svg>
<svg style="left:2050px;top:189px;" width="38" height="35" viewBox="0 0 38 35"><path d="M6 4 H20.5" stroke="#3d8ee6" stroke-width="1.6"/><path d="M2.2 1.5 V7 M24.5 1.5 V7" stroke="#3d8ee6" stroke-width="1.8"/><path d="M4.5 4 L9 1 V7Z M22 4 L17.5 1 V7Z" fill="#3d8ee6"/><rect x="1.5" y="12" width="32" height="21" fill="#f7f7f7" stroke="#222" stroke-width="0.8"/><path d="M8.5 12 V33 M20 12 V33 M26.5 12 V33 M1.5 17 H33.5 M1.5 28 H33.5" stroke="#c7c7c7" stroke-width="0.8"/><rect x="8.5" y="17" width="11.5" height="11" fill="#5d9ee3"/></svg>
<div style="left:2095px;top:198.02px;font-family:'Liberation Sans', sans-serif;font-size:21px;line-height:21px;font-weight:400;color:#f4f4f4;letter-spacing:0.6px;white-space:pre;"><span style="display:inline-block;white-space:pre;">Format</span></div>
<svg style="left:2172px;top:204px;" width="10" height="8" viewBox="0 0 10 8"><path d="M0 0H10L5.0 8Z" fill="#c9c9c9"/></svg>
<svg style="left:2238px;top:98px;" width="30" height="36" viewBox="0 0 30 36"><path d="M2 1.5 H26 V7 H23.5 L22.5 5 H10 L18.5 17 L9.5 29.5 H23 L24.5 26.5 H27.5 V34 H2 V32 L12.5 17.5 L2 3.5Z" fill="#b9b9b9"/></svg>
<svg style="left:2282px;top:112px;" width="10" height="8" viewBox="0 0 10 8"><path d="M0 0H10L5.0 8Z" fill="#c9c9c9"/></svg>
<svg style="left:2238px;top:146px;" width="30" height="32" viewBox="0 0 30 32"><rect x="0.5" y="0.5" width="26" height="30" fill="#f4f4f4" stroke="#222" stroke-width="0.8"/><rect x="1" y="1" width="25" height="5" fill="#a8a8a8"/><path d="M10 11 H17 V17 H21.5 L13.5 25 L5.5 17 H10Z" fill="#4b8fe0"/></svg>
<svg style="left:2276px;top:159px;" width="10" height="7" viewBox="0 0 10 7"><path d="M0 0H10L5.0 7Z" fill="#c9c9c9"/></svg>
<svg style="left:2234px;top:190px;" width="38" height="36" viewBox="0 0 38 36"><path d="M3 27 L21 5 a3 3 0 0 1 4 -1 L33 10 a3 3 0 0 1 0 4 L15 34 L13 34.5 L4 29.5Z" fill="#e693ab"/><path d="M3 27 L21 5 a3 3 0 0 1 4 -1 L33 10 L15 31Z" fill="#f0a6bb"/><path d="M3 27 L9 21 L17 28 L13 34Z" fill="#f5c2d1"/></svg>
<svg style="left:2276px;top:204px;" width="10" height="8" viewBox="0 0 10 8"><path d="M0 0H10L5.0 8Z" fill="#c9c9c9"/></svg>
<svg style="left:2316px;top:112px;" width="64" height="52" viewBox="0 0 64 52"><text x="12" y="23.5" font-family="Liberation Sans" font-size="29" font-weight="bold" fill="#3d8ee6" text-anchor="middle" transform="translate(1.5 0) scale(0.9 1)">A</text><text x="13.5" y="50" font-family="Liberation Sans" font-size="29" font-weight="bold" fill="#8c8c8c" text-anchor="middle" transform="scale(0.9 1)">Z</text><path d="M25 15 C25 10 61 10 61 15 L47 31 V45 a3.5 3.5 0 0 1 -7 0 V31Z" fill="#9a9a9a"/><ellipse cx="43" cy="14.5" rx="17" ry="4.5" fill="#e6e6e6" stroke="#8a8a8a" stroke-width="1.2"/></svg>
<svg style="left:2384.4px;top:134px;" width="9.599999999999909" height="7.400000000000006" viewBox="0 0 9.599999999999909 7.400000000000006"><path d="M0 0H9.599999999999909L4.7999999999999545 7.400000000000006Z" fill="#c9c9c9"/></svg>
<div style="left:2353.9px;width:0;display:flex;justify-content:center;top:180.02px;font-family:'Liberation Sans', sans-serif;font-size:21px;line-height:21px;font-weight:400;color:#f4f4f4;letter-spacing:0.6px;white-space:pre;"><span style="display:inline-block;white-space:pre;">Sort &amp;</span></div>
<div style="left:2353.8px;width:0;display:flex;justify-content:center;top:203.82px;font-family:'Liberation Sans', sans-serif;font-size:21px;line-height:21px;font-weight:400;color:#f4f4f4;letter-spacing:0.6px;white-space:pre;"><span style="display:inline-block;white-space:pre;">Filter</span></div>
<svg style="left:2417px;top:107px;" width="62" height="62" viewBox="0 0 62 62"><path d="M25 39 L5 57" stroke="#3a78c0" stroke-width="6" stroke-linecap="round"/><circle cx="37.5" cy="23.5" r="19" fill="#fff" stroke="#3d7cc4" stroke-width="6.5"/></svg>
<svg style="left:2486px;top:134px;" width="9.699999999999818" height="7" viewBox="0 0 9.699999999999818 7"><path d="M0 0H9.699999999999818L4.849999999999909 7Z" fill="#c9c9c9"/></svg>
<div style="left:2456.4px;width:0;display:flex;justify-content:center;top:180.02px;font-family:'Liberation Sans', sans-serif;font-size:21px;line-height:21px;font-weight:400;color:#f4f4f4;letter-spacing:0.6px;white-space:pre;"><span style="display:inline-block;white-space:pre;">Find &amp;</span></div>
<div style="left:2456px;width:0;display:flex;justify-content:center;top:203.82px;font-family:'Liberation Sans', sans-serif;font-size:21px;line-height:21px;font-weight:400;color:#f4f4f4;letter-spacing:0.6px;white-space:pre;"><span style="display:inline-block;white-space:pre;">Select</span></div>
<div style="left:0px;top:233px;width:2560px;height:61px;background:linear-gradient(#fdf6e5,#f8efdb);"></div>
<div style="left:0px;top:293.5px;width:2560px;height:2.5px;background:linear-gradient(#d9d0ba,#b9b19c);"></div>
<svg style="left:17px;top:251px;" width="30" height="30" viewBox="0 0 30 30"><circle cx="15" cy="14.5" r="14" fill="#a58c63" stroke="#fff" stroke-opacity="0.5" stroke-width="0.8"/><path d="M9.5 9 L20.5 20 M20.5 9 L9.5 20" stroke="#fff" stroke-width="3.3"/></svg>
<div style="left:65px;top:253.98px;font-family:'Liberation Sans', sans-serif;font-size:24px;line-height:24px;font-weight:400;color:#222;letter-spacing:1.0px;white-space:pre;-webkit-text-stroke:0.7px #222;"><span style="display:inline-block;white-space:pre;">Office Update</span></div>
<div style="left:243px;top:253.68px;font-family:'Liberation Sans', sans-serif;font-size:24px;line-height:24px;font-weight:400;color:#222;letter-spacing:0.78px;white-space:pre;"><span style="display:inline-block;white-space:pre;">To keep up-to-date with security updates, fixes, and improvements, choose Check for Updates.</span></div>
<div style="left:2294.6px;top:246.7px;width:249px;height:34.6px;border:1.6px solid #aca692;border-radius:9px;box-sizing:border-box;"></div>
<div style="left:2314px;top:253.38px;font-family:'Liberation Sans', sans-serif;font-size:24px;line-height:24px;font-weight:400;color:#1e1e1e;letter-spacing:0.64px;white-space:pre;"><span style="display:inline-block;white-space:pre;">Check for Updates</span></div>
<div style="left:0px;top:296px;width:2560px;height:52px;background:#222222;"></div>
<div style="left:2px;top:296px;width:166px;height:52px;background:#252525;"></div>
<div style="left:168px;top:296px;width:4px;height:52px;background:#1c1c1c;"></div>
<div style="left:21.5px;top:310.43px;font-family:'Liberation Sans', sans-serif;font-size:23px;line-height:23px;font-weight:400;color:#e4e4e4;letter-spacing:-0.3px;white-space:pre;"><span style="display:inline-block;white-space:pre;">E108</span></div>
<svg style="left:146px;top:305px;" width="13.599999999999994" height="11.5" viewBox="0 0 13.599999999999994 11.5"><path d="M0 11.5H13.599999999999994L6.799999999999997 0Z" fill="#b8b8b8"/></svg>
<svg style="left:146px;top:329px;" width="13.599999999999994" height="12" viewBox="0 0 13.599999999999994 12"><path d="M0 0H13.599999999999994L6.799999999999997 12Z" fill="#b8b8b8"/></svg>
<svg style="left:199px;top:311px;" width="24" height="24" viewBox="0 0 24 24"><path d="M3 3 L21 21 M21 3 L3 21" stroke="#5a5a5a" stroke-width="3.6"/></svg>
<svg style="left:254px;top:311px;" width="32" height="25" viewBox="0 0 32 25"><path d="M2.5 12 L11 20.5 L29.5 3" fill="none" stroke="#5a5a5a" stroke-width="3.8"/></svg>
<div style="left:312px;top:303.03px;font-family:'Liberation Serif', serif;font-size:36px;line-height:36px;font-weight:400;color:#8c8c8c;letter-spacing:0px;white-space:pre;font-style:italic;"><span style="display:inline-block;white-space:pre;">fx</span></div>
<div style="left:360px;top:304px;width:2165px;height:38px;background:#393939;"></div>
<div style="left:360px;top:307px;width:2px;height:32px;background:#2e2e2e;"></div>
<div style="left:376.4px;top:310.98px;font-family:'Liberation Sans', sans-serif;font-size:24px;line-height:24px;font-weight:400;color:#ffffff;letter-spacing:0.2px;white-space:pre;"><span style="display:inline-block;white-space:pre;">Cherie cayabyab</span></div>
<svg style="left:2535px;top:316px;" width="18" height="14" viewBox="0 0 18 14"><path d="M0 0H18L9.0 14Z" fill="#bdbdbd"/></svg>
<div style="left:0px;top:348px;width:2560px;height:6px;background:linear-gradient(#3a3a3a 0px,#d6d6d6 1px,#e4e4e4 4px,#6a6a6a 5.5px);"></div>
<div style="left:40px;top:392px;width:2520px;height:968px;background:#ffffff;"></div>
<div style="left:250px;top:392px;width:2px;height:24px;background:#dadada;"></div>
<div style="left:416px;top:392px;width:2px;height:24px;background:#dadada;"></div>
<div style="left:648px;top:392px;width:2px;height:24px;background:#dadada;"></div>
<div style="left:826px;top:392px;width:2px;height:24px;background:#dadada;"></div>
<div style="left:1142px;top:392px;width:2px;height:24px;background:#dadada;"></div>
<div style="left:1476px;top:392px;width:2px;height:24px;background:#dadada;"></div>
<div style="left:1654px;top:392px;width:2px;height:24px;background:#dadada;"></div>
<div style="left:1828px;top:392px;width:2px;height:24px;background:#dadada;"></div>
<div style="left:2068px;top:392px;width:2px;height:24px;background:#dadada;"></div>
<div style="left:2380px;top:392px;width:2px;height:24px;background:#dadada;"></div>
<div style="left:2384px;top:392px;width:2px;height:24px;background:#dadada;"></div>
<div style="left:40px;top:418px;width:2520px;height:50px;background:#808080;"></div>
<div style="left:40px;top:470px;width:210px;height:102px;background:#d9e1f2;"></div>
<div style="left:252px;top:470px;width:2128px;height:50px;background:#ffff33;"></div>
<div style="left:2386px;top:470px;width:174px;height:50px;background:#ffff33;"></div>
<div style="left:252px;top:522px;width:2128px;height:50px;background:#d9e1f2;"></div>
<div style="left:2386px;top:522px;width:174px;height:50px;background:#d9e1f2;"></div>
<div style="left:40px;top:574px;width:210px;height:786px;background:#9dc3e6;"></div>
<div style="left:1656px;top:1050px;width:724px;height:50px;background:#f70e1b;"></div>
<div style="left:2386px;top:864px;width:174px;height:2px;background:#d4d4d4;"></div>
<div style="left:2386px;top:910px;width:174px;height:2px;background:#d4d4d4;"></div>
<div style="left:2386px;top:956px;width:174px;height:2px;background:#d4d4d4;"></div>
<div style="left:2386px;top:1002px;width:174px;height:2px;background:#d4d4d4;"></div>
<div style="left:2386px;top:1048px;width:174px;height:2px;background:#d4d4d4;"></div>
<div style="left:2386px;top:1100px;width:174px;height:2px;background:#d4d4d4;"></div>
<div style="left:2386px;top:1152px;width:174px;height:2px;background:#d4d4d4;"></div>
<div style="left:2386px;top:1204px;width:174px;height:2px;background:#d4d4d4;"></div>
<div style="left:2386px;top:1256px;width:174px;height:2px;background:#d4d4d4;"></div>
<div style="left:2386px;top:1308px;width:174px;height:2px;background:#d4d4d4;"></div>
<div style="left:2384px;top:864px;width:2px;height:496px;background:#d4d4d4;"></div>
<div style="left:40px;top:416px;width:2520px;height:2px;background:#000;"></div>
<div style="left:40px;top:468px;width:2520px;height:2px;background:#000;"></div>
<div style="left:250px;top:470px;width:2px;height:890px;background:#000;"></div>
<div style="left:252px;top:520px;width:2128px;height:2px;background:#000;"></div>
<div style="left:2386px;top:520px;width:174px;height:2px;background:#000;"></div>
<div style="left:416px;top:522px;width:2px;height:838px;background:#000;"></div>
<div style="left:648px;top:522px;width:2px;height:838px;background:#000;"></div>
<div style="left:826px;top:522px;width:2px;height:838px;background:#000;"></div>
<div style="left:1142px;top:522px;width:2px;height:838px;background:#000;"></div>
<div style="left:1476px;top:522px;width:2px;height:838px;background:#000;"></div>
<div style="left:1654px;top:522px;width:2px;height:838px;background:#000;"></div>
<div style="left:1828px;top:522px;width:2px;height:838px;background:#000;"></div>
<div style="left:2068px;top:522px;width:2px;height:838px;background:#000;"></div>
<div style="left:2380px;top:470px;width:6px;height:202px;background:#000;"></div>
<div style="left:2380px;top:672px;width:2px;height:688px;background:#000;"></div>
<div style="left:2384px;top:672px;width:2px;height:192px;background:#000;"></div>
<div style="left:40px;top:620px;width:2340px;height:2px;background:#000;"></div>
<div style="left:40px;top:672px;width:2340px;height:2px;background:#000;"></div>
<div style="left:40px;top:726px;width:2340px;height:2px;background:#000;"></div>
<div style="left:40px;top:772px;width:2340px;height:2px;background:#000;"></div>
<div style="left:40px;top:818px;width:2340px;height:2px;background:#000;"></div>
<div style="left:40px;top:864px;width:2340px;height:2px;background:#000;"></div>
<div style="left:40px;top:910px;width:2340px;height:2px;background:#000;"></div>
<div style="left:40px;top:956px;width:2340px;height:2px;background:#000;"></div>
<div style="left:40px;top:1002px;width:2340px;height:2px;background:#000;"></div>
<div style="left:40px;top:1048px;width:2340px;height:2px;background:#000;"></div>
<div style="left:40px;top:1100px;width:2340px;height:2px;background:#000;"></div>
<div style="left:40px;top:1152px;width:2340px;height:2px;background:#000;"></div>
<div style="left:40px;top:1204px;width:2340px;height:2px;background:#000;"></div>
<div style="left:40px;top:1256px;width:2340px;height:2px;background:#000;"></div>
<div style="left:40px;top:1308px;width:2340px;height:2px;background:#000;"></div>
<div style="left:2386px;top:620px;width:174px;height:2px;background:#000;"></div>
<div style="left:2386px;top:672px;width:174px;height:2px;background:#000;"></div>
<div style="left:2386px;top:726px;width:174px;height:2px;background:#000;"></div>
<div style="left:2386px;top:772px;width:174px;height:2px;background:#000;"></div>
<div style="left:2386px;top:818px;width:174px;height:2px;background:#000;"></div>
<div style="left:40px;top:572px;width:2520px;height:2px;background:#a3a3a3;"></div>
<div style="left:2043.9px;width:0;display:flex;justify-content:center;top:430.74px;font-family:'Liberation Sans', sans-serif;font-size:25px;line-height:25px;font-weight:700;color:#000;letter-spacing:0px;white-space:pre;"><span style="display:inline-block;white-space:pre;transform:scaleX(0.8825);transform-origin:center 50%;">REGULAR EMPLOYEE</span></div>
<div style="left:145.5px;width:0;display:flex;justify-content:center;top:515.36px;font-family:'Liberation Sans', sans-serif;font-size:16px;line-height:16px;font-weight:700;color:#000;letter-spacing:0px;white-space:pre;"><span style="display:inline-block;white-space:pre;transform:scaleX(0.8859);transform-origin:center 50%;">RECEIVING SALARY VIA</span></div>
<div style="left:1314.8px;width:0;display:flex;justify-content:center;top:489.06px;font-family:'Liberation Sans', sans-serif;font-size:16px;line-height:16px;font-weight:700;color:#000;letter-spacing:0px;white-space:pre;"><span style="display:inline-block;white-space:pre;transform:scaleX(0.878);transform-origin:center 50%;">EMPLOYEE CARD</span></div>
<div style="left:334.0px;width:0;display:flex;justify-content:center;top:541.26px;font-family:'Liberation Sans', sans-serif;font-size:16px;line-height:16px;font-weight:700;color:#000;letter-spacing:0px;white-space:pre;"><span style="display:inline-block;white-space:pre;transform:scaleX(0.9042);transform-origin:center 50%;">LAST NAME</span></div>
<div style="left:533.0px;width:0;display:flex;justify-content:center;top:541.26px;font-family:'Liberation Sans', sans-serif;font-size:16px;line-height:16px;font-weight:700;color:#000;letter-spacing:0px;white-space:pre;"><span style="display:inline-block;white-space:pre;transform:scaleX(0.9093);transform-origin:center 50%;">FIRST NAME</span></div>
<div style="left:738.0px;width:0;display:flex;justify-content:center;top:541.26px;font-family:'Liberation Sans', sans-serif;font-size:16px;line-height:16px;font-weight:700;color:#000;letter-spacing:0px;white-space:pre;"><span style="display:inline-block;white-space:pre;transform:scaleX(0.9502);transform-origin:center 50%;">MIDDLE NAME</span></div>
<div style="left:985.0px;width:0;display:flex;justify-content:center;top:541.26px;font-family:'Liberation Sans', sans-serif;font-size:16px;line-height:16px;font-weight:700;color:#000;letter-spacing:0px;white-space:pre;"><span style="display:inline-block;white-space:pre;transform:scaleX(0.8714);transform-origin:center 50%;">ADDRESS REGISTERED ON THE CARD</span></div>
<div style="left:1310.0px;width:0;display:flex;justify-content:center;top:541.26px;font-family:'Liberation Sans', sans-serif;font-size:16px;line-height:16px;font-weight:700;color:#000;letter-spacing:0px;white-space:pre;"><span style="display:inline-block;white-space:pre;transform:scaleX(0.929);transform-origin:center 50%;">EMAIL</span></div>
<div style="left:1566.0px;width:0;display:flex;justify-content:center;top:541.26px;font-family:'Liberation Sans', sans-serif;font-size:16px;line-height:16px;font-weight:700;color:#000;letter-spacing:0px;white-space:pre;"><span style="display:inline-block;white-space:pre;transform:scaleX(0.9192);transform-origin:center 50%;">CONTACT NUMBER</span></div>
<div style="left:1742.0px;width:0;display:flex;justify-content:center;top:541.26px;font-family:'Liberation Sans', sans-serif;font-size:16px;line-height:16px;font-weight:700;color:#000;letter-spacing:0px;white-space:pre;"><span style="display:inline-block;white-space:pre;transform:scaleX(0.8934);transform-origin:center 50%;">BANK</span></div>
<div style="left:2225.0px;width:0;display:flex;justify-content:center;top:541.26px;font-family:'Liberation Sans', sans-serif;font-size:16px;line-height:16px;font-weight:700;color:#000;letter-spacing:0px;white-space:pre;"><span style="display:inline-block;white-space:pre;transform:scaleX(0.8777);transform-origin:center 50%;">BRANCH ADDRESS</span></div>
<div style="left:1837.8px;top:541.26px;font-family:'Liberation Sans', sans-serif;font-size:16px;line-height:16px;font-weight:700;color:#000;letter-spacing:0px;white-space:pre;"><span style="display:inline-block;white-space:pre;transform:scaleX(0.9143);transform-origin:left 50%;">CARD NUMBER</span></div>
<div style="left:2478px;width:0;display:flex;justify-content:center;top:541.26px;font-family:'Liberation Sans', sans-serif;font-size:16px;line-height:16px;font-weight:700;color:#000;letter-spacing:0px;white-space:pre;"><span style="display:inline-block;white-space:pre;transform:scaleX(0.9042);transform-origin:center 50%;">LAST NAME</span></div>
<div style="left:40px;top:574px;width:210px;height:46px;overflow:hidden;">
<div style="left:3.80px;top:15.46px;font-family:'Liberation Sans', sans-serif;font-size:16px;line-height:16px;font-weight:400;color:#000;letter-spacing:0px;white-space:pre;"><span style="display:inline-block;white-space:pre;transform:scaleX(0.8903);transform-origin:left 50%;">BANK TRANSFER</span></div>
</div>
<div style="left:252px;top:574px;width:164px;height:46px;overflow:hidden;">
<div style="left:3.80px;top:15.46px;font-family:'Liberation Sans', sans-serif;font-size:16px;line-height:16px;font-weight:400;color:#000;letter-spacing:0px;white-space:pre;"><span style="display:inline-block;white-space:pre;transform:scaleX(1.1095);transform-origin:left 50%;">Miller</span></div>
</div>
<div style="left:418px;top:574px;width:230px;height:46px;overflow:hidden;">
<div style="left:3.80px;top:15.46px;font-family:'Liberation Sans', sans-serif;font-size:16px;line-height:16px;font-weight:400;color:#000;letter-spacing:0px;white-space:pre;"><span style="display:inline-block;white-space:pre;transform:scaleX(0.9364);transform-origin:left 50%;">James</span></div>
</div>
<div style="left:650px;top:574px;width:176px;height:46px;overflow:hidden;">
<div style="left:3.80px;top:15.46px;font-family:'Liberation Sans', sans-serif;font-size:16px;line-height:16px;font-weight:400;color:#000;letter-spacing:0px;white-space:pre;"><span style="display:inline-block;white-space:pre;transform:scaleX(1.007);transform-origin:left 50%;">Adigue</span></div>
</div>
<div style="left:828px;top:574px;width:314px;height:46px;overflow:hidden;">
<div style="left:3.80px;top:3.36px;font-family:'Liberation Sans', sans-serif;font-size:16px;line-height:16px;font-weight:400;color:#000;letter-spacing:0px;white-space:pre;"><span style="display:inline-block;white-space:pre;transform:scaleX(1.007);transform-origin:left 50%;">156 Gen Ordonez, Marikina Hieghts,</span></div>
<div style="left:3.80px;top:28.66px;font-family:'Liberation Sans', sans-serif;font-size:16px;line-height:16px;font-weight:400;color:#000;letter-spacing:0px;white-space:pre;"><span style="display:inline-block;white-space:pre;transform:scaleX(1.032);transform-origin:left 50%;">Marikina City</span></div>
</div>
<div style="left:1656px;top:574px;width:172px;height:46px;overflow:hidden;">
<div style="left:3.80px;top:15.46px;font-family:'Liberation Sans', sans-serif;font-size:16px;line-height:16px;font-weight:400;color:#000;letter-spacing:0px;white-space:pre;"><span style="display:inline-block;white-space:pre;transform:scaleX(0.9034);transform-origin:left 50%;">BPI</span></div>
</div>
<div style="left:2070px;top:574px;width:310px;height:46px;overflow:hidden;">
<div style="left:3.80px;top:3.36px;font-family:'Liberation Sans', sans-serif;font-size:16px;line-height:16px;font-weight:400;color:#000;letter-spacing:0px;white-space:pre;"><span style="display:inline-block;white-space:pre;transform:scaleX(0.9994);transform-origin:left 50%;">Ayalamalls Marikina G/F 101 Liwasang</span></div>
<div style="left:3.80px;top:28.66px;font-family:'Liberation Sans', sans-serif;font-size:16px;line-height:16px;font-weight:400;color:#000;letter-spacing:0px;white-space:pre;"><span style="display:inline-block;white-space:pre;transform:scaleX(1.0138);transform-origin:left 50%;">Kalayaan Ave., Marikina Heights, Marikina</span></div>
</div>
<div style="left:40px;top:622px;width:210px;height:50px;overflow:hidden;">
<div style="left:3.80px;top:19.26px;font-family:'Liberation Sans', sans-serif;font-size:16px;line-height:16px;font-weight:400;color:#000;letter-spacing:0px;white-space:pre;"><span style="display:inline-block;white-space:pre;transform:scaleX(0.8903);transform-origin:left 50%;">BANK TRANSFER</span></div>
</div>
<div style="left:252px;top:622px;width:164px;height:50px;overflow:hidden;">
<div style="left:3.80px;top:19.26px;font-family:'Liberation Sans', sans-serif;font-size:16px;line-height:16px;font-weight:400;color:#000;letter-spacing:0px;white-space:pre;"><span style="display:inline-block;white-space:pre;transform:scaleX(1.0167);transform-origin:left 50%;">Lloren</span></div>
</div>
<div style="left:418px;top:622px;width:230px;height:50px;overflow:hidden;">
<div style="left:3.80px;top:19.26px;font-family:'Liberation Sans', sans-serif;font-size:16px;line-height:16px;font-weight:400;color:#000;letter-spacing:0px;white-space:pre;"><span style="display:inline-block;white-space:pre;transform:scaleX(1.0094);transform-origin:left 50%;">Karim</span></div>
</div>
<div style="left:650px;top:622px;width:176px;height:50px;overflow:hidden;">
<div style="left:3.80px;top:19.26px;font-family:'Liberation Sans', sans-serif;font-size:16px;line-height:16px;font-weight:400;color:#000;letter-spacing:0px;white-space:pre;"><span style="display:inline-block;white-space:pre;transform:scaleX(1.0294);transform-origin:left 50%;">Niedo</span></div>
</div>
<div style="left:828px;top:622px;width:314px;height:50px;overflow:hidden;">
<div style="left:3.80px;top:7.16px;font-family:'Liberation Sans', sans-serif;font-size:16px;line-height:16px;font-weight:400;color:#000;letter-spacing:0px;white-space:pre;"><span style="display:inline-block;white-space:pre;transform:scaleX(0.9904);transform-origin:left 50%;">185 Tandang Sora Ave, Tandang Sora,</span></div>
<div style="left:3.80px;top:32.46px;font-family:'Liberation Sans', sans-serif;font-size:16px;line-height:16px;font-weight:400;color:#000;letter-spacing:0px;white-space:pre;"><span style="display:inline-block;white-space:pre;transform:scaleX(1.0332);transform-origin:left 50%;">uezon City,1116</span></div>
</div>
<div style="left:1656px;top:622px;width:172px;height:50px;overflow:hidden;">
<div style="left:3.80px;top:19.26px;font-family:'Liberation Sans', sans-serif;font-size:16px;line-height:16px;font-weight:400;color:#000;letter-spacing:0px;white-space:pre;"><span style="display:inline-block;white-space:pre;transform:scaleX(1.0679);transform-origin:left 50%;">Metrobank</span></div>
</div>
<div style="left:2070px;top:622px;width:310px;height:50px;overflow:hidden;">
<div style="left:3.80px;top:19.26px;font-family:'Liberation Sans', sans-serif;font-size:16px;line-height:16px;font-weight:400;color:#000;letter-spacing:0px;white-space:pre;"><span style="display:inline-block;white-space:pre;transform:scaleX(1.0196);transform-origin:left 50%;">Metrobank Tandang Sora</span></div>
</div>
<div style="left:40px;top:674px;width:210px;height:52px;overflow:hidden;">
<div style="left:3.80px;top:21.46px;font-family:'Liberation Sans', sans-serif;font-size:16px;line-height:16px;font-weight:400;color:#000;letter-spacing:0px;white-space:pre;"><span style="display:inline-block;white-space:pre;transform:scaleX(0.9981);transform-origin:left 50%;">PAYMAYA</span></div>
</div>
<div style="left:252px;top:674px;width:164px;height:52px;overflow:hidden;">
<div style="left:3.80px;top:21.46px;font-family:'Liberation Sans', sans-serif;font-size:16px;line-height:16px;font-weight:400;color:#000;letter-spacing:0px;white-space:pre;"><span style="display:inline-block;white-space:pre;transform:scaleX(0.998);transform-origin:left 50%;">David</span></div>
</div>
<div style="left:418px;top:674px;width:230px;height:52px;overflow:hidden;">
<div style="left:3.80px;top:21.46px;font-family:'Liberation Sans', sans-serif;font-size:16px;line-height:16px;font-weight:400;color:#000;letter-spacing:0px;white-space:pre;"><span style="display:inline-block;white-space:pre;transform:scaleX(1.0283);transform-origin:left 50%;">Nathan</span></div>
</div>
<div style="left:650px;top:674px;width:176px;height:52px;overflow:hidden;">
<div style="left:3.80px;top:21.46px;font-family:'Liberation Sans', sans-serif;font-size:16px;line-height:16px;font-weight:400;color:#000;letter-spacing:0px;white-space:pre;"><span style="display:inline-block;white-space:pre;transform:scaleX(1.0041);transform-origin:left 50%;">Alah</span></div>
</div>
<div style="left:828px;top:674px;width:314px;height:52px;overflow:hidden;">
<div style="left:3.80px;top:9.36px;font-family:'Liberation Sans', sans-serif;font-size:16px;line-height:16px;font-weight:400;color:#000;letter-spacing:0px;white-space:pre;"><span style="display:inline-block;white-space:pre;transform:scaleX(1.0096);transform-origin:left 50%;">53 Dona Manuela Avenue, Pamplona</span></div>
<div style="left:3.80px;top:34.66px;font-family:'Liberation Sans', sans-serif;font-size:16px;line-height:16px;font-weight:400;color:#000;letter-spacing:0px;white-space:pre;"><span style="display:inline-block;white-space:pre;transform:scaleX(0.9505);transform-origin:left 50%;">Tres, Las Pinas City</span></div>
</div>
<div style="left:40px;top:728px;width:210px;height:44px;overflow:hidden;">
<div style="left:3.80px;top:17.46px;font-family:'Liberation Sans', sans-serif;font-size:16px;line-height:16px;font-weight:400;color:#000;letter-spacing:0px;white-space:pre;"><span style="display:inline-block;white-space:pre;transform:scaleX(0.8903);transform-origin:left 50%;">BANK TRANSFER</span></div>
</div>
<div style="left:252px;top:728px;width:164px;height:44px;overflow:hidden;">
<div style="left:3.80px;top:17.46px;font-family:'Liberation Sans', sans-serif;font-size:16px;line-height:16px;font-weight:400;color:#000;letter-spacing:0px;white-space:pre;"><span style="display:inline-block;white-space:pre;transform:scaleX(0.9894);transform-origin:left 50%;">Blanco</span></div>
</div>
<div style="left:418px;top:728px;width:230px;height:44px;overflow:hidden;">
<div style="left:3.80px;top:17.46px;font-family:'Liberation Sans', sans-serif;font-size:16px;line-height:16px;font-weight:400;color:#000;letter-spacing:0px;white-space:pre;"><span style="display:inline-block;white-space:pre;transform:scaleX(1.0071);transform-origin:left 50%;">Mary Grace</span></div>
</div>
<div style="left:650px;top:728px;width:176px;height:44px;overflow:hidden;">
<div style="left:3.80px;top:17.46px;font-family:'Liberation Sans', sans-serif;font-size:16px;line-height:16px;font-weight:400;color:#000;letter-spacing:0px;white-space:pre;"><span style="display:inline-block;white-space:pre;transform:scaleX(0.9638);transform-origin:left 50%;">Salcedo</span></div>
</div>
<div style="left:828px;top:728px;width:314px;height:44px;overflow:hidden;">
<div style="left:3.80px;top:5.36px;font-family:'Liberation Sans', sans-serif;font-size:16px;line-height:16px;font-weight:400;color:#000;letter-spacing:0px;white-space:pre;"><span style="display:inline-block;white-space:pre;transform:scaleX(1.0044);transform-origin:left 50%;">Block 2 Lot 18 Aquarius St, Goodwill</span></div>
<div style="left:3.80px;top:30.66px;font-family:'Liberation Sans', sans-serif;font-size:16px;line-height:16px;font-weight:400;color:#000;letter-spacing:0px;white-space:pre;"><span style="display:inline-block;white-space:pre;transform:scaleX(0.9954);transform-origin:left 50%;">Townhomes,  Bagbag, Novaliches ,</span></div>
</div>
<div style="left:1656px;top:728px;width:172px;height:44px;overflow:hidden;">
<div style="left:3.80px;top:17.46px;font-family:'Liberation Sans', sans-serif;font-size:16px;line-height:16px;font-weight:400;color:#000;letter-spacing:0px;white-space:pre;"><span style="display:inline-block;white-space:pre;transform:scaleX(0.9034);transform-origin:left 50%;">BPI</span></div>
</div>
<div style="left:2070px;top:728px;width:310px;height:44px;overflow:hidden;">
<div style="left:3.80px;top:5.36px;font-family:'Liberation Sans', sans-serif;font-size:16px;line-height:16px;font-weight:400;color:#000;letter-spacing:0px;white-space:pre;"><span style="display:inline-block;white-space:pre;transform:scaleX(0.9695);transform-origin:left 50%;">Paseo De Roxas Branch, 6781, 1200</span></div>
<div style="left:3.80px;top:30.66px;font-family:'Liberation Sans', sans-serif;font-size:16px;line-height:16px;font-weight:400;color:#000;letter-spacing:0px;white-space:pre;"><span style="display:inline-block;white-space:pre;transform:scaleX(1.0382);transform-origin:left 50%;">Ayala Ave, Makati, Metro Manila,</span></div>
</div>
<div style="left:40px;top:774px;width:210px;height:44px;overflow:hidden;">
<div style="left:3.80px;top:17.16px;font-family:'Liberation Sans', sans-serif;font-size:16px;line-height:16px;font-weight:400;color:#000;letter-spacing:0px;white-space:pre;"><span style="display:inline-block;white-space:pre;transform:scaleX(0.8903);transform-origin:left 50%;">BANK TRANSFER</span></div>
</div>
<div style="left:252px;top:774px;width:164px;height:44px;overflow:hidden;">
<div style="left:3.80px;top:17.16px;font-family:'Liberation Sans', sans-serif;font-size:16px;line-height:16px;font-weight:400;color:#000;letter-spacing:0px;white-space:pre;"><span style="display:inline-block;white-space:pre;transform:scaleX(0.9468);transform-origin:left 50%;">Cruz</span></div>
</div>
<div style="left:418px;top:774px;width:230px;height:44px;overflow:hidden;">
<div style="left:3.80px;top:17.16px;font-family:'Liberation Sans', sans-serif;font-size:16px;line-height:16px;font-weight:400;color:#000;letter-spacing:0px;white-space:pre;"><span style="display:inline-block;white-space:pre;transform:scaleX(1.0164);transform-origin:left 50%;">Rachelle Monique</span></div>
</div>
<div style="left:650px;top:774px;width:176px;height:44px;overflow:hidden;">
<div style="left:3.80px;top:17.16px;font-family:'Liberation Sans', sans-serif;font-size:16px;line-height:16px;font-weight:400;color:#000;letter-spacing:0px;white-space:pre;"><span style="display:inline-block;white-space:pre;transform:scaleX(1.0184);transform-origin:left 50%;">Bautista</span></div>
</div>
<div style="left:828px;top:774px;width:314px;height:44px;overflow:hidden;">
<div style="left:3.80px;top:5.06px;font-family:'Liberation Sans', sans-serif;font-size:16px;line-height:16px;font-weight:400;color:#000;letter-spacing:0px;white-space:pre;"><span style="display:inline-block;white-space:pre;transform:scaleX(0.973);transform-origin:left 50%;">Blk 9 Lot 68 San Marino Classic, Salawag,</span></div>
<div style="left:3.80px;top:30.36px;font-family:'Liberation Sans', sans-serif;font-size:16px;line-height:16px;font-weight:400;color:#000;letter-spacing:0px;white-space:pre;"><span style="display:inline-block;white-space:pre;transform:scaleX(0.9838);transform-origin:left 50%;">Dasmarinas, Cavite</span></div>
</div>
<div style="left:1656px;top:774px;width:172px;height:44px;overflow:hidden;">
<div style="left:3.80px;top:17.16px;font-family:'Liberation Sans', sans-serif;font-size:16px;line-height:16px;font-weight:400;color:#000;letter-spacing:0px;white-space:pre;"><span style="display:inline-block;white-space:pre;transform:scaleX(0.9034);transform-origin:left 50%;">BPI</span></div>
</div>
<div style="left:2070px;top:774px;width:310px;height:44px;overflow:hidden;">
<div style="left:3.80px;top:17.16px;font-family:'Liberation Sans', sans-serif;font-size:16px;line-height:16px;font-weight:400;color:#000;letter-spacing:0px;white-space:pre;"><span style="display:inline-block;white-space:pre;transform:scaleX(1.0336);transform-origin:left 50%;">Philamlife</span></div>
</div>
<div style="left:40px;top:820px;width:210px;height:44px;overflow:hidden;">
<div style="left:3.80px;top:17.46px;font-family:'Liberation Sans', sans-serif;font-size:16px;line-height:16px;font-weight:400;color:#000;letter-spacing:0px;white-space:pre;"><span style="display:inline-block;white-space:pre;transform:scaleX(0.8903);transform-origin:left 50%;">BANK TRANSFER</span></div>
</div>
<div style="left:252px;top:820px;width:164px;height:44px;overflow:hidden;">
<div style="left:3.80px;top:17.46px;font-family:'Liberation Sans', sans-serif;font-size:16px;line-height:16px;font-weight:400;color:#000;letter-spacing:0px;white-space:pre;"><span style="display:inline-block;white-space:pre;transform:scaleX(1.0011);transform-origin:left 50%;">Guevarra</span></div>
</div>
<div style="left:418px;top:820px;width:230px;height:44px;overflow:hidden;">
<div style="left:3.80px;top:17.46px;font-family:'Liberation Sans', sans-serif;font-size:16px;line-height:16px;font-weight:400;color:#000;letter-spacing:0px;white-space:pre;"><span style="display:inline-block;white-space:pre;transform:scaleX(0.9499);transform-origin:left 50%;">Alyssa</span></div>
</div>
<div style="left:828px;top:820px;width:314px;height:44px;overflow:hidden;">
<div style="left:3.80px;top:5.36px;font-family:'Liberation Sans', sans-serif;font-size:16px;line-height:16px;font-weight:400;color:#000;letter-spacing:0px;white-space:pre;"><span style="display:inline-block;white-space:pre;transform:scaleX(1.008);transform-origin:left 50%;">7th Avenue, Corner P. Tuazon Blvd,</span></div>
<div style="left:3.80px;top:30.66px;font-family:'Liberation Sans', sans-serif;font-size:16px;line-height:16px;font-weight:400;color:#000;letter-spacing:0px;white-space:pre;"><span style="display:inline-block;white-space:pre;transform:scaleX(0.9999);transform-origin:left 50%;">Cubao, Quezon City, 1109</span></div>
</div>
<div style="left:1656px;top:820px;width:172px;height:44px;overflow:hidden;">
<div style="left:3.80px;top:5.36px;font-family:'Liberation Sans', sans-serif;font-size:16px;line-height:16px;font-weight:400;color:#000;letter-spacing:0px;white-space:pre;"><span style="display:inline-block;white-space:pre;transform:scaleX(1.0257);transform-origin:left 50%;">UnionBank of the</span></div>
<div style="left:3.80px;top:30.66px;font-family:'Liberation Sans', sans-serif;font-size:16px;line-height:16px;font-weight:400;color:#000;letter-spacing:0px;white-space:pre;"><span style="display:inline-block;white-space:pre;transform:scaleX(1.0142);transform-origin:left 50%;">Philippines</span></div>
</div>
<div style="left:2070px;top:820px;width:310px;height:44px;overflow:hidden;">
<div style="left:3.80px;top:5.36px;font-family:'Liberation Sans', sans-serif;font-size:16px;line-height:16px;font-weight:400;color:#000;letter-spacing:0px;white-space:pre;"><span style="display:inline-block;white-space:pre;transform:scaleX(1.008);transform-origin:left 50%;">7th Avenue, Corner P. Tuazon Blvd,</span></div>
<div style="left:3.80px;top:30.66px;font-family:'Liberation Sans', sans-serif;font-size:16px;line-height:16px;font-weight:400;color:#000;letter-spacing:0px;white-space:pre;"><span style="display:inline-block;white-space:pre;transform:scaleX(0.9999);transform-origin:left 50%;">Cubao, Quezon City, 1109</span></div>
</div>
<div style="left:40px;top:866px;width:210px;height:44px;overflow:hidden;">
<div style="left:3.80px;top:17.46px;font-family:'Liberation Sans', sans-serif;font-size:16px;line-height:16px;font-weight:400;color:#000;letter-spacing:0px;white-space:pre;"><span style="display:inline-block;white-space:pre;transform:scaleX(0.8903);transform-origin:left 50%;">BANK TRANSFER</span></div>
</div>
<div style="left:252px;top:866px;width:164px;height:44px;overflow:hidden;">
<div style="left:3.80px;top:17.46px;font-family:'Liberation Sans', sans-serif;font-size:16px;line-height:16px;font-weight:400;color:#000;letter-spacing:0px;white-space:pre;"><span style="display:inline-block;white-space:pre;transform:scaleX(0.9846);transform-origin:left 50%;">Castor</span></div>
</div>
<div style="left:418px;top:866px;width:230px;height:44px;overflow:hidden;">
<div style="left:3.80px;top:17.46px;font-family:'Liberation Sans', sans-serif;font-size:16px;line-height:16px;font-weight:400;color:#000;letter-spacing:0px;white-space:pre;"><span style="display:inline-block;white-space:pre;transform:scaleX(1.0074);transform-origin:left 50%;">Frederick</span></div>
</div>
<div style="left:650px;top:866px;width:176px;height:44px;overflow:hidden;">
<div style="left:3.80px;top:17.46px;font-family:'Liberation Sans', sans-serif;font-size:16px;line-height:16px;font-weight:400;color:#000;letter-spacing:0px;white-space:pre;"><span style="display:inline-block;white-space:pre;transform:scaleX(1.0029);transform-origin:left 50%;">Agcaoili</span></div>
</div>
<div style="left:828px;top:866px;width:314px;height:44px;overflow:hidden;">
<div style="left:3.80px;top:5.36px;font-family:'Liberation Sans', sans-serif;font-size:16px;line-height:16px;font-weight:400;color:#000;letter-spacing:0px;white-space:pre;"><span style="display:inline-block;white-space:pre;transform:scaleX(1.0057);transform-origin:left 50%;">Unit 1614 Corinthian Executive Regency,</span></div>
<div style="left:3.80px;top:30.66px;font-family:'Liberation Sans', sans-serif;font-size:16px;line-height:16px;font-weight:400;color:#000;letter-spacing:0px;white-space:pre;"><span style="display:inline-block;white-space:pre;transform:scaleX(0.9862);transform-origin:left 50%;">Ortigas Avenue, Pasig City</span></div>
</div>
<div style="left:1656px;top:866px;width:172px;height:44px;overflow:hidden;">
<div style="left:3.80px;top:17.46px;font-family:'Liberation Sans', sans-serif;font-size:16px;line-height:16px;font-weight:400;color:#000;letter-spacing:0px;white-space:pre;"><span style="display:inline-block;white-space:pre;transform:scaleX(0.9034);transform-origin:left 50%;">BPI</span></div>
</div>
<div style="left:2070px;top:866px;width:310px;height:44px;overflow:hidden;">
<div style="left:3.80px;top:17.46px;font-family:'Liberation Sans', sans-serif;font-size:16px;line-height:16px;font-weight:400;color:#000;letter-spacing:0px;white-space:pre;"><span style="display:inline-block;white-space:pre;transform:scaleX(1.0125);transform-origin:left 50%;">Robinsons Equitable Tower</span></div>
</div>
<div style="left:40px;top:912px;width:210px;height:44px;overflow:hidden;">
<div style="left:3.80px;top:17.46px;font-family:'Liberation Sans', sans-serif;font-size:16px;line-height:16px;font-weight:400;color:#000;letter-spacing:0px;white-space:pre;"><span style="display:inline-block;white-space:pre;transform:scaleX(0.8903);transform-origin:left 50%;">BANK TRANSFER</span></div>
</div>
<div style="left:252px;top:912px;width:164px;height:44px;overflow:hidden;">
<div style="left:3.80px;top:17.46px;font-family:'Liberation Sans', sans-serif;font-size:16px;line-height:16px;font-weight:400;color:#000;letter-spacing:0px;white-space:pre;"><span style="display:inline-block;white-space:pre;transform:scaleX(1.0135);transform-origin:left 50%;">Cabintoy</span></div>
</div>
<div style="left:418px;top:912px;width:230px;height:44px;overflow:hidden;">
<div style="left:3.80px;top:17.46px;font-family:'Liberation Sans', sans-serif;font-size:16px;line-height:16px;font-weight:400;color:#000;letter-spacing:0px;white-space:pre;"><span style="display:inline-block;white-space:pre;transform:scaleX(0.9806);transform-origin:left 50%;">Joyce Giovanni</span></div>
</div>
<div style="left:650px;top:912px;width:176px;height:44px;overflow:hidden;">
<div style="left:3.80px;top:17.46px;font-family:'Liberation Sans', sans-serif;font-size:16px;line-height:16px;font-weight:400;color:#000;letter-spacing:0px;white-space:pre;"><span style="display:inline-block;white-space:pre;transform:scaleX(1.0356);transform-origin:left 50%;">Averilla</span></div>
</div>
<div style="left:1656px;top:912px;width:172px;height:44px;overflow:hidden;">
<div style="left:3.80px;top:17.46px;font-family:'Liberation Sans', sans-serif;font-size:16px;line-height:16px;font-weight:400;color:#000;letter-spacing:0px;white-space:pre;"><span style="display:inline-block;white-space:pre;transform:scaleX(0.9322);transform-origin:left 50%;">BDO</span></div>
</div>
<div style="left:2070px;top:912px;width:310px;height:44px;overflow:hidden;">
<div style="left:3.80px;top:17.46px;font-family:'Liberation Sans', sans-serif;font-size:16px;line-height:16px;font-weight:400;color:#000;letter-spacing:0px;white-space:pre;"><span style="display:inline-block;white-space:pre;transform:scaleX(1.0035);transform-origin:left 50%;">SM Aura Premeire Taguig City</span></div>
</div>
<div style="left:40px;top:958px;width:210px;height:44px;overflow:hidden;">
<div style="left:3.80px;top:17.46px;font-family:'Liberation Sans', sans-serif;font-size:16px;line-height:16px;font-weight:400;color:#000;letter-spacing:0px;white-space:pre;"><span style="display:inline-block;white-space:pre;transform:scaleX(0.8903);transform-origin:left 50%;">BANK TRANSFER</span></div>
</div>
<div style="left:252px;top:958px;width:164px;height:44px;overflow:hidden;">
<div style="left:3.80px;top:17.46px;font-family:'Liberation Sans', sans-serif;font-size:16px;line-height:16px;font-weight:400;color:#000;letter-spacing:0px;white-space:pre;"><span style="display:inline-block;white-space:pre;transform:scaleX(1.048);transform-origin:left 50%;">Mohammad</span></div>
</div>
<div style="left:418px;top:958px;width:230px;height:44px;overflow:hidden;">
<div style="left:3.80px;top:17.46px;font-family:'Liberation Sans', sans-serif;font-size:16px;line-height:16px;font-weight:400;color:#000;letter-spacing:0px;white-space:pre;"><span style="display:inline-block;white-space:pre;transform:scaleX(0.9841);transform-origin:left 50%;">Rhianna</span></div>
</div>
<div style="left:650px;top:958px;width:176px;height:44px;overflow:hidden;">
<div style="left:3.80px;top:17.46px;font-family:'Liberation Sans', sans-serif;font-size:16px;line-height:16px;font-weight:400;color:#000;letter-spacing:0px;white-space:pre;"><span style="display:inline-block;white-space:pre;transform:scaleX(1.0155);transform-origin:left 50%;">Peñarroyo</span></div>
</div>
<div style="left:828px;top:958px;width:314px;height:44px;overflow:hidden;">
<div style="left:3.80px;top:5.36px;font-family:'Liberation Sans', sans-serif;font-size:16px;line-height:16px;font-weight:400;color:#000;letter-spacing:0px;white-space:pre;"><span style="display:inline-block;white-space:pre;transform:scaleX(0.9928);transform-origin:left 50%;">Unit 5, 472, Esmeralda Compound, DR</span></div>
<div style="left:3.80px;top:30.66px;font-family:'Liberation Sans', sans-serif;font-size:16px;line-height:16px;font-weight:400;color:#000;letter-spacing:0px;white-space:pre;"><span style="display:inline-block;white-space:pre;transform:scaleX(1.0043);transform-origin:left 50%;">Sixto Antonio Ave., Maybunga, Pasig City</span></div>
</div>
<div style="left:1656px;top:958px;width:172px;height:44px;overflow:hidden;">
<div style="left:3.80px;top:17.46px;font-family:'Liberation Sans', sans-serif;font-size:16px;line-height:16px;font-weight:400;color:#000;letter-spacing:0px;white-space:pre;"><span style="display:inline-block;white-space:pre;transform:scaleX(0.9322);transform-origin:left 50%;">BDO</span></div>
</div>
<div style="left:2070px;top:958px;width:310px;height:44px;overflow:hidden;">
<div style="left:3.80px;top:17.46px;font-family:'Liberation Sans', sans-serif;font-size:16px;line-height:16px;font-weight:400;color:#000;letter-spacing:0px;white-space:pre;"><span style="display:inline-block;white-space:pre;transform:scaleX(0.9959);transform-origin:left 50%;">Strata 100 - Ortigas Branch</span></div>
</div>
<div style="left:40px;top:1004px;width:210px;height:44px;overflow:hidden;">
<div style="left:3.80px;top:17.46px;font-family:'Liberation Sans', sans-serif;font-size:16px;line-height:16px;font-weight:400;color:#000;letter-spacing:0px;white-space:pre;"><span style="display:inline-block;white-space:pre;transform:scaleX(0.8903);transform-origin:left 50%;">BANK TRANSFER</span></div>
</div>
<div style="left:252px;top:1004px;width:164px;height:44px;overflow:hidden;">
<div style="left:3.80px;top:17.46px;font-family:'Liberation Sans', sans-serif;font-size:16px;line-height:16px;font-weight:400;color:#000;letter-spacing:0px;white-space:pre;"><span style="display:inline-block;white-space:pre;transform:scaleX(0.9862);transform-origin:left 50%;">Poquiz</span></div>
</div>
<div style="left:418px;top:1004px;width:230px;height:44px;overflow:hidden;">
<div style="left:3.80px;top:17.46px;font-family:'Liberation Sans', sans-serif;font-size:16px;line-height:16px;font-weight:400;color:#000;letter-spacing:0px;white-space:pre;"><span style="display:inline-block;white-space:pre;transform:scaleX(0.9873);transform-origin:left 50%;">Joseph Ferdinand</span></div>
</div>
<div style="left:650px;top:1004px;width:176px;height:44px;overflow:hidden;">
<div style="left:3.80px;top:17.46px;font-family:'Liberation Sans', sans-serif;font-size:16px;line-height:16px;font-weight:400;color:#000;letter-spacing:0px;white-space:pre;"><span style="display:inline-block;white-space:pre;transform:scaleX(1.0214);transform-origin:left 50%;">Bonifacio</span></div>
</div>
<div style="left:828px;top:1004px;width:314px;height:44px;overflow:hidden;">
<div style="left:3.80px;top:5.36px;font-family:'Liberation Sans', sans-serif;font-size:16px;line-height:16px;font-weight:400;color:#000;letter-spacing:0px;white-space:pre;"><span style="display:inline-block;white-space:pre;transform:scaleX(1.0132);transform-origin:left 50%;">945 San Agustin Street, Malinta,</span></div>
<div style="left:3.80px;top:30.66px;font-family:'Liberation Sans', sans-serif;font-size:16px;line-height:16px;font-weight:400;color:#000;letter-spacing:0px;white-space:pre;"><span style="display:inline-block;white-space:pre;transform:scaleX(1.0079);transform-origin:left 50%;">Valenzuela City, 1440</span></div>
</div>
<div style="left:1656px;top:1004px;width:172px;height:44px;overflow:hidden;">
<div style="left:3.80px;top:17.46px;font-family:'Liberation Sans', sans-serif;font-size:16px;line-height:16px;font-weight:400;color:#000;letter-spacing:0px;white-space:pre;"><span style="display:inline-block;white-space:pre;transform:scaleX(0.9889);transform-origin:left 50%;">Security Bank</span></div>
</div>
<div style="left:2070px;top:1004px;width:310px;height:44px;overflow:hidden;">
<div style="left:3.80px;top:17.46px;font-family:'Liberation Sans', sans-serif;font-size:16px;line-height:16px;font-weight:400;color:#000;letter-spacing:0px;white-space:pre;"><span style="display:inline-block;white-space:pre;transform:scaleX(1.0218);transform-origin:left 50%;">Malinta Valenzuela City</span></div>
</div>
<div style="left:40px;top:1050px;width:210px;height:50px;overflow:hidden;">
<div style="left:3.80px;top:19.96px;font-family:'Liberation Sans', sans-serif;font-size:16px;line-height:16px;font-weight:400;color:#000;letter-spacing:0px;white-space:pre;"><span style="display:inline-block;white-space:pre;transform:scaleX(0.8812);transform-origin:left 50%;">GCASH</span></div>
</div>
<div style="left:252px;top:1050px;width:164px;height:50px;overflow:hidden;">
<div style="left:3.80px;top:19.96px;font-family:'Liberation Sans', sans-serif;font-size:16px;line-height:16px;font-weight:400;color:#000;letter-spacing:0px;white-space:pre;"><span style="display:inline-block;white-space:pre;transform:scaleX(1.0238);transform-origin:left 50%;">Protacio</span></div>
</div>
<div style="left:418px;top:1050px;width:230px;height:50px;overflow:hidden;">
<div style="left:3.80px;top:19.96px;font-family:'Liberation Sans', sans-serif;font-size:16px;line-height:16px;font-weight:400;color:#000;letter-spacing:0px;white-space:pre;"><span style="display:inline-block;white-space:pre;transform:scaleX(1.0661);transform-origin:left 50%;">Norwin</span></div>
</div>
<div style="left:252px;top:1102px;width:164px;height:50px;overflow:hidden;">
<div style="left:3.80px;top:19.46px;font-family:'Liberation Sans', sans-serif;font-size:16px;line-height:16px;font-weight:400;color:#000;letter-spacing:0px;white-space:pre;"><span style="display:inline-block;white-space:pre;transform:scaleX(0.955);transform-origin:left 50%;">Cataag</span></div>
</div>
<div style="left:418px;top:1102px;width:230px;height:50px;overflow:hidden;">
<div style="left:3.80px;top:19.46px;font-family:'Liberation Sans', sans-serif;font-size:16px;line-height:16px;font-weight:400;color:#000;letter-spacing:0px;white-space:pre;"><span style="display:inline-block;white-space:pre;transform:scaleX(0.9773);transform-origin:left 50%;">Vanny Rose</span></div>
</div>
<div style="left:650px;top:1102px;width:176px;height:50px;overflow:hidden;">
<div style="left:3.80px;top:19.46px;font-family:'Liberation Sans', sans-serif;font-size:16px;line-height:16px;font-weight:400;color:#000;letter-spacing:0px;white-space:pre;"><span style="display:inline-block;white-space:pre;transform:scaleX(0.9735);transform-origin:left 50%;">Capalar</span></div>
</div>
<div style="left:828px;top:1102px;width:314px;height:50px;overflow:hidden;">
<div style="left:3.80px;top:7.36px;font-family:'Liberation Sans', sans-serif;font-size:16px;line-height:16px;font-weight:400;color:#000;letter-spacing:0px;white-space:pre;"><span style="display:inline-block;white-space:pre;transform:scaleX(0.993);transform-origin:left 50%;">031 Ibong Pilak St. Brgy. Sta Monica</span></div>
<div style="left:3.80px;top:32.66px;font-family:'Liberation Sans', sans-serif;font-size:16px;line-height:16px;font-weight:400;color:#000;letter-spacing:0px;white-space:pre;"><span style="display:inline-block;white-space:pre;transform:scaleX(0.9921);transform-origin:left 50%;">Novaliches Quezon City</span></div>
</div>
<div style="left:252px;top:1154px;width:164px;height:50px;overflow:hidden;">
<div style="left:3.80px;top:19.46px;font-family:'Liberation Sans', sans-serif;font-size:16px;line-height:16px;font-weight:400;color:#000;letter-spacing:0px;white-space:pre;"><span style="display:inline-block;white-space:pre;transform:scaleX(1.0094);transform-origin:left 50%;">Alonzo</span></div>
</div>
<div style="left:418px;top:1154px;width:230px;height:50px;overflow:hidden;">
<div style="left:3.80px;top:19.46px;font-family:'Liberation Sans', sans-serif;font-size:16px;line-height:16px;font-weight:400;color:#000;letter-spacing:0px;white-space:pre;"><span style="display:inline-block;white-space:pre;transform:scaleX(1.0423);transform-origin:left 50%;">Michael</span></div>
</div>
<div style="left:40px;top:1206px;width:210px;height:50px;overflow:hidden;">
<div style="left:3.80px;top:19.96px;font-family:'Liberation Sans', sans-serif;font-size:16px;line-height:16px;font-weight:400;color:#000;letter-spacing:0px;white-space:pre;"><span style="display:inline-block;white-space:pre;transform:scaleX(0.8903);transform-origin:left 50%;">BANK TRANSFER</span></div>
</div>
<div style="left:252px;top:1206px;width:164px;height:50px;overflow:hidden;">
<div style="left:3.80px;top:19.96px;font-family:'Liberation Sans', sans-serif;font-size:16px;line-height:16px;font-weight:400;color:#000;letter-spacing:0px;white-space:pre;"><span style="display:inline-block;white-space:pre;transform:scaleX(0.9476);transform-origin:left 50%;">Cabales</span></div>
</div>
<div style="left:418px;top:1206px;width:230px;height:50px;overflow:hidden;">
<div style="left:3.80px;top:19.96px;font-family:'Liberation Sans', sans-serif;font-size:16px;line-height:16px;font-weight:400;color:#000;letter-spacing:0px;white-space:pre;"><span style="display:inline-block;white-space:pre;transform:scaleX(1.0106);transform-origin:left 50%;">Christian</span></div>
</div>
<div style="left:650px;top:1206px;width:176px;height:50px;overflow:hidden;">
<div style="left:3.80px;top:19.96px;font-family:'Liberation Sans', sans-serif;font-size:16px;line-height:16px;font-weight:400;color:#000;letter-spacing:0px;white-space:pre;"><span style="display:inline-block;white-space:pre;transform:scaleX(1.0054);transform-origin:left 50%;">Viernes</span></div>
</div>
<div style="left:828px;top:1206px;width:314px;height:50px;overflow:hidden;">
<div style="left:3.80px;top:7.86px;font-family:'Liberation Sans', sans-serif;font-size:16px;line-height:16px;font-weight:400;color:#000;letter-spacing:0px;white-space:pre;"><span style="display:inline-block;white-space:pre;transform:scaleX(0.9837);transform-origin:left 50%;">#22 Lising St. Rema Village Brgy. Tandang</span></div>
<div style="left:3.80px;top:33.16px;font-family:'Liberation Sans', sans-serif;font-size:16px;line-height:16px;font-weight:400;color:#000;letter-spacing:0px;white-space:pre;"><span style="display:inline-block;white-space:pre;transform:scaleX(0.9788);transform-origin:left 50%;">Sora, Quezon City</span></div>
</div>
<div style="left:1656px;top:1206px;width:172px;height:50px;overflow:hidden;">
<div style="left:3.80px;top:19.96px;font-family:'Liberation Sans', sans-serif;font-size:16px;line-height:16px;font-weight:400;color:#000;letter-spacing:0px;white-space:pre;"><span style="display:inline-block;white-space:pre;transform:scaleX(0.9805);transform-origin:left 50%;">Banco De Oro</span></div>
</div>
<div style="left:2070px;top:1206px;width:310px;height:50px;overflow:hidden;">
<div style="left:3.80px;top:19.96px;font-family:'Liberation Sans', sans-serif;font-size:16px;line-height:16px;font-weight:400;color:#000;letter-spacing:0px;white-space:pre;"><span style="display:inline-block;white-space:pre;transform:scaleX(0.9807);transform-origin:left 50%;">Tandang Sora San Vicente de Paul</span></div>
</div>
<div style="left:40px;top:1258px;width:210px;height:50px;overflow:hidden;">
<div style="left:3.80px;top:19.46px;font-family:'Liberation Sans', sans-serif;font-size:16px;line-height:16px;font-weight:400;color:#000;letter-spacing:0px;white-space:pre;"><span style="display:inline-block;white-space:pre;transform:scaleX(0.8903);transform-origin:left 50%;">BANK TRANSFER</span></div>
</div>
<div style="left:252px;top:1258px;width:164px;height:50px;overflow:hidden;">
<div style="left:3.80px;top:19.46px;font-family:'Liberation Sans', sans-serif;font-size:16px;line-height:16px;font-weight:400;color:#000;letter-spacing:0px;white-space:pre;"><span style="display:inline-block;white-space:pre;transform:scaleX(1.0206);transform-origin:left 50%;">Portiz</span></div>
</div>
<div style="left:418px;top:1258px;width:230px;height:50px;overflow:hidden;">
<div style="left:3.80px;top:19.46px;font-family:'Liberation Sans', sans-serif;font-size:16px;line-height:16px;font-weight:400;color:#000;letter-spacing:0px;white-space:pre;"><span style="display:inline-block;white-space:pre;transform:scaleX(1.023);transform-origin:left 50%;">Reyorvilino</span></div>
</div>
<div style="left:650px;top:1258px;width:176px;height:50px;overflow:hidden;">
<div style="left:3.80px;top:19.46px;font-family:'Liberation Sans', sans-serif;font-size:16px;line-height:16px;font-weight:400;color:#000;letter-spacing:0px;white-space:pre;"><span style="display:inline-block;white-space:pre;transform:scaleX(1.0486);transform-origin:left 50%;">Del Monte</span></div>
</div>
<div style="left:828px;top:1258px;width:314px;height:50px;overflow:hidden;">
<div style="left:3.80px;top:19.46px;font-family:'Liberation Sans', sans-serif;font-size:16px;line-height:16px;font-weight:400;color:#000;letter-spacing:0px;white-space:pre;"><span style="display:inline-block;white-space:pre;transform:scaleX(0.9974);transform-origin:left 50%;">2327 Legarda Street, Sampaloc, Manila</span></div>
</div>
<div style="left:1656px;top:1258px;width:172px;height:50px;overflow:hidden;">
<div style="left:3.80px;top:19.46px;font-family:'Liberation Sans', sans-serif;font-size:16px;line-height:16px;font-weight:400;color:#000;letter-spacing:0px;white-space:pre;"><span style="display:inline-block;white-space:pre;transform:scaleX(0.9034);transform-origin:left 50%;">BPI</span></div>
</div>
<div style="left:2070px;top:1258px;width:310px;height:50px;overflow:hidden;">
<div style="left:3.80px;top:19.46px;font-family:'Liberation Sans', sans-serif;font-size:16px;line-height:16px;font-weight:400;color:#000;letter-spacing:0px;white-space:pre;"><span style="display:inline-block;white-space:pre;transform:scaleX(0.9996);transform-origin:left 50%;">St. Francis Mall (back of SM Megamall)</span></div>
</div>
<div style="left:40px;top:1310px;width:210px;height:50px;overflow:hidden;">
<div style="left:3.80px;top:19.46px;font-family:'Liberation Sans', sans-serif;font-size:16px;line-height:16px;font-weight:400;color:#000;letter-spacing:0px;white-space:pre;"><span style="display:inline-block;white-space:pre;transform:scaleX(0.8903);transform-origin:left 50%;">BANK TRANSFER</span></div>
</div>
<div style="left:252px;top:1310px;width:164px;height:50px;overflow:hidden;">
<div style="left:3.80px;top:19.46px;font-family:'Liberation Sans', sans-serif;font-size:16px;line-height:16px;font-weight:400;color:#000;letter-spacing:0px;white-space:pre;"><span style="display:inline-block;white-space:pre;transform:scaleX(1.0298);transform-origin:left 50%;">Pontillos</span></div>
</div>
<div style="left:418px;top:1310px;width:230px;height:50px;overflow:hidden;">
<div style="left:3.80px;top:19.46px;font-family:'Liberation Sans', sans-serif;font-size:16px;line-height:16px;font-weight:400;color:#000;letter-spacing:0px;white-space:pre;"><span style="display:inline-block;white-space:pre;transform:scaleX(0.9871);transform-origin:left 50%;">Rolando Jr.</span></div>
</div>
<div style="left:650px;top:1310px;width:176px;height:50px;overflow:hidden;">
<div style="left:3.80px;top:19.46px;font-family:'Liberation Sans', sans-serif;font-size:16px;line-height:16px;font-weight:400;color:#000;letter-spacing:0px;white-space:pre;"><span style="display:inline-block;white-space:pre;transform:scaleX(1.0103);transform-origin:left 50%;">Peralta</span></div>
</div>
<div style="left:828px;top:1310px;width:314px;height:50px;overflow:hidden;">
<div style="left:3.80px;top:7.36px;font-family:'Liberation Sans', sans-serif;font-size:16px;line-height:16px;font-weight:400;color:#000;letter-spacing:0px;white-space:pre;"><span style="display:inline-block;white-space:pre;transform:scaleX(1.0043);transform-origin:left 50%;">Unit 6 #17 August Street, Congressional</span></div>
<div style="left:3.80px;top:32.66px;font-family:'Liberation Sans', sans-serif;font-size:16px;line-height:16px;font-weight:400;color:#000;letter-spacing:0px;white-space:pre;"><span style="display:inline-block;white-space:pre;transform:scaleX(0.9988);transform-origin:left 50%;">Village, Brgy., Bahay Toro, Quezon City</span></div>
</div>
<div style="left:1656px;top:1310px;width:172px;height:50px;overflow:hidden;">
<div style="left:3.80px;top:19.46px;font-family:'Liberation Sans', sans-serif;font-size:16px;line-height:16px;font-weight:400;color:#000;letter-spacing:0px;white-space:pre;"><span style="display:inline-block;white-space:pre;transform:scaleX(1.0679);transform-origin:left 50%;">Metrobank</span></div>
</div>
<div style="left:2070px;top:1310px;width:310px;height:50px;overflow:hidden;">
<div style="left:3.80px;top:19.46px;font-family:'Liberation Sans', sans-serif;font-size:16px;line-height:16px;font-weight:400;color:#000;letter-spacing:0px;white-space:pre;"><span style="display:inline-block;white-space:pre;transform:scaleX(1.0349);transform-origin:left 50%;">Metrobank Project 8 - Shorthorn</span></div>
</div>
<div style="left:1144px;top:570px;width:322px;height:790px;background:#fff;"></div>
<div style="left:1146px;top:572px;width:318px;height:785px;background:#b8305c;"></div>
<div style="left:1464px;top:570px;width:197px;height:790px;background:#fff;"></div>
<div style="left:1466px;top:573px;width:193px;height:785px;background:#b8305c;"></div>
<div style="left:1827px;top:570px;width:241px;height:478px;background:#fff;"></div>
<div style="left:1832px;top:575px;width:232px;height:468px;background:#b8305c;"></div>
<div style="left:1827px;top:1203px;width:241px;height:157px;background:#fff;"></div>
<div style="left:1829px;top:1205px;width:237px;height:153px;background:#b8305c;"></div>
<div style="left:1277px;top:783px;width:6px;height:44px;background:#000;"></div>
<div style="left:0px;top:354px;width:2560px;height:36px;background:#181818;"></div>
<svg style="left:8px;top:360px;" width="28" height="28" viewBox="0 0 28 28"><path d="M26 2 V26 H3Z" fill="#575757"/></svg>
<div style="left:826px;top:354px;width:318px;height:36px;background:#5a5a5a;"></div>
<div style="left:250px;top:354px;width:2px;height:36px;background:#6c6c6c;"></div>
<div style="left:416px;top:354px;width:2px;height:36px;background:#6c6c6c;"></div>
<div style="left:648px;top:354px;width:2px;height:36px;background:#6c6c6c;"></div>
<div style="left:1476px;top:354px;width:2px;height:36px;background:#6c6c6c;"></div>
<div style="left:1654px;top:354px;width:2px;height:36px;background:#6c6c6c;"></div>
<div style="left:1828px;top:354px;width:2px;height:36px;background:#6c6c6c;"></div>
<div style="left:2068px;top:354px;width:2px;height:36px;background:#6c6c6c;"></div>
<div style="left:2380px;top:354px;width:2px;height:36px;background:#6c6c6c;"></div>
<div style="left:2384px;top:354px;width:2px;height:36px;background:#6c6c6c;"></div>
<div style="left:826px;top:388px;width:318px;height:4px;background:#227447;"></div>
<div style="left:0px;top:390px;width:2560px;height:2px;background:#c9c9c9;"></div>
<div style="left:826px;top:388px;width:318px;height:3px;background:#227447;"></div>
<div style="left:145px;width:0;display:flex;justify-content:center;top:364.03px;font-family:'Liberation Sans', sans-serif;font-size:16.5px;line-height:16.5px;font-weight:700;color:#ffffff;letter-spacing:0px;white-space:pre;"><span style="display:inline-block;white-space:pre;">A</span></div>
<div style="left:335px;width:0;display:flex;justify-content:center;top:364.03px;font-family:'Liberation Sans', sans-serif;font-size:16.5px;line-height:16.5px;font-weight:700;color:#ffffff;letter-spacing:0px;white-space:pre;"><span style="display:inline-block;white-space:pre;">B</span></div>
<div style="left:532.5px;width:0;display:flex;justify-content:center;top:364.03px;font-family:'Liberation Sans', sans-serif;font-size:16.5px;line-height:16.5px;font-weight:700;color:#ffffff;letter-spacing:0px;white-space:pre;"><span style="display:inline-block;white-space:pre;">C</span></div>
<div style="left:737.5px;width:0;display:flex;justify-content:center;top:364.03px;font-family:'Liberation Sans', sans-serif;font-size:16.5px;line-height:16.5px;font-weight:700;color:#ffffff;letter-spacing:0px;white-space:pre;"><span style="display:inline-block;white-space:pre;">D</span></div>
<div style="left:985px;width:0;display:flex;justify-content:center;top:364.03px;font-family:'Liberation Sans', sans-serif;font-size:16.5px;line-height:16.5px;font-weight:700;color:#ffffff;letter-spacing:0px;white-space:pre;"><span style="display:inline-block;white-space:pre;transform:scaleX(0.75);transform-origin:center 50%;">E</span></div>
<div style="left:1310px;width:0;display:flex;justify-content:center;top:364.03px;font-family:'Liberation Sans', sans-serif;font-size:16.5px;line-height:16.5px;font-weight:700;color:#ffffff;letter-spacing:0px;white-space:pre;"><span style="display:inline-block;white-space:pre;">F</span></div>
<div style="left:1565.5px;width:0;display:flex;justify-content:center;top:364.03px;font-family:'Liberation Sans', sans-serif;font-size:16.5px;line-height:16.5px;font-weight:700;color:#ffffff;letter-spacing:0px;white-space:pre;"><span style="display:inline-block;white-space:pre;">G</span></div>
<div style="left:1740.5px;width:0;display:flex;justify-content:center;top:364.03px;font-family:'Liberation Sans', sans-serif;font-size:16.5px;line-height:16.5px;font-weight:700;color:#ffffff;letter-spacing:0px;white-space:pre;"><span style="display:inline-block;white-space:pre;">H</span></div>
<div style="left:1950.5px;width:0;display:flex;justify-content:center;top:364.03px;font-family:'Liberation Sans', sans-serif;font-size:16.5px;line-height:16.5px;font-weight:700;color:#ffffff;letter-spacing:0px;white-space:pre;"><span style="display:inline-block;white-space:pre;">I</span></div>
<div style="left:2224.5px;width:0;display:flex;justify-content:center;top:364.03px;font-family:'Liberation Sans', sans-serif;font-size:16.5px;line-height:16.5px;font-weight:700;color:#ffffff;letter-spacing:0px;white-space:pre;"><span style="display:inline-block;white-space:pre;">J</span></div>
<div style="left:2478.5px;width:0;display:flex;justify-content:center;top:364.03px;font-family:'Liberation Sans', sans-serif;font-size:16.5px;line-height:16.5px;font-weight:700;color:#ffffff;letter-spacing:0px;white-space:pre;"><span style="display:inline-block;white-space:pre;">L</span></div>
<div style="left:2383px;top:366px;width:2px;height:12px;background:#ffffff;"></div>
<div style="left:0px;top:392px;width:38px;height:968px;background:#181818;"></div>
<div style="left:38px;top:354px;width:2px;height:1006px;background:#c3c3c3;"></div>
<div style="left:0px;top:416px;width:38px;height:2px;background:#5e5e5e;"></div>
<div style="left:0px;top:468px;width:38px;height:2px;background:#5e5e5e;"></div>
<div style="left:0px;top:520px;width:38px;height:2px;background:#5e5e5e;"></div>
<div style="left:0px;top:572px;width:38px;height:2px;background:#9a9a9a;"></div>
<div style="left:0px;top:620px;width:38px;height:2px;background:#5e5e5e;"></div>
<div style="left:0px;top:672px;width:38px;height:2px;background:#5e5e5e;"></div>
<div style="left:0px;top:726px;width:38px;height:2px;background:#5e5e5e;"></div>
<div style="left:0px;top:772px;width:38px;height:2px;background:#5e5e5e;"></div>
<div style="left:0px;top:818px;width:38px;height:2px;background:#5e5e5e;"></div>
<div style="left:0px;top:864px;width:38px;height:2px;background:#5e5e5e;"></div>
<div style="left:0px;top:910px;width:38px;height:2px;background:#5e5e5e;"></div>
<div style="left:0px;top:956px;width:38px;height:2px;background:#5e5e5e;"></div>
<div style="left:0px;top:1002px;width:38px;height:2px;background:#5e5e5e;"></div>
<div style="left:0px;top:1048px;width:38px;height:2px;background:#5e5e5e;"></div>
<div style="left:0px;top:1100px;width:38px;height:2px;background:#5e5e5e;"></div>
<div style="left:0px;top:1152px;width:38px;height:2px;background:#5e5e5e;"></div>
<div style="left:0px;top:1204px;width:38px;height:2px;background:#5e5e5e;"></div>
<div style="left:0px;top:1256px;width:38px;height:2px;background:#5e5e5e;"></div>
<div style="left:0px;top:1308px;width:38px;height:2px;background:#5e5e5e;"></div>
<div style="left:19.5px;width:0;display:flex;justify-content:center;top:397.96px;font-family:'Liberation Sans', sans-serif;font-size:16px;line-height:16px;font-weight:700;color:#ffffff;letter-spacing:0px;white-space:pre;"><span style="display:inline-block;white-space:pre;">1</span></div>
<div style="left:19.5px;width:0;display:flex;justify-content:center;top:449.96px;font-family:'Liberation Sans', sans-serif;font-size:16px;line-height:16px;font-weight:700;color:#ffffff;letter-spacing:0px;white-space:pre;"><span style="display:inline-block;white-space:pre;">2</span></div>
<div style="left:19.5px;width:0;display:flex;justify-content:center;top:501.96px;font-family:'Liberation Sans', sans-serif;font-size:16px;line-height:16px;font-weight:700;color:#ffffff;letter-spacing:0px;white-space:pre;"><span style="display:inline-block;white-space:pre;">3</span></div>
<div style="left:19.5px;width:0;display:flex;justify-content:center;top:553.96px;font-family:'Liberation Sans', sans-serif;font-size:16px;line-height:16px;font-weight:700;color:#ffffff;letter-spacing:0px;white-space:pre;"><span style="display:inline-block;white-space:pre;">4</span></div>
<div style="left:19.5px;width:0;display:flex;justify-content:center;top:601.96px;font-family:'Liberation Sans', sans-serif;font-size:16px;line-height:16px;font-weight:700;color:#ffffff;letter-spacing:0px;white-space:pre;"><span style="display:inline-block;white-space:pre;">25</span></div>
<div style="left:19.5px;width:0;display:flex;justify-content:center;top:653.96px;font-family:'Liberation Sans', sans-serif;font-size:16px;line-height:16px;font-weight:700;color:#ffffff;letter-spacing:0px;white-space:pre;"><span style="display:inline-block;white-space:pre;">26</span></div>
<div style="left:19.5px;width:0;display:flex;justify-content:center;top:707.96px;font-family:'Liberation Sans', sans-serif;font-size:16px;line-height:16px;font-weight:700;color:#ffffff;letter-spacing:0px;white-space:pre;"><span style="display:inline-block;white-space:pre;">27</span></div>
<div style="left:19.5px;width:0;display:flex;justify-content:center;top:753.96px;font-family:'Liberation Sans', sans-serif;font-size:16px;line-height:16px;font-weight:700;color:#ffffff;letter-spacing:0px;white-space:pre;"><span style="display:inline-block;white-space:pre;">28</span></div>
<div style="left:19.5px;width:0;display:flex;justify-content:center;top:799.96px;font-family:'Liberation Sans', sans-serif;font-size:16px;line-height:16px;font-weight:700;color:#ffffff;letter-spacing:0px;white-space:pre;"><span style="display:inline-block;white-space:pre;">29</span></div>
<div style="left:19.5px;width:0;display:flex;justify-content:center;top:845.96px;font-family:'Liberation Sans', sans-serif;font-size:16px;line-height:16px;font-weight:700;color:#ffffff;letter-spacing:0px;white-space:pre;"><span style="display:inline-block;white-space:pre;">30</span></div>
<div style="left:19.5px;width:0;display:flex;justify-content:center;top:891.96px;font-family:'Liberation Sans', sans-serif;font-size:16px;line-height:16px;font-weight:700;color:#ffffff;letter-spacing:0px;white-space:pre;"><span style="display:inline-block;white-space:pre;">31</span></div>
<div style="left:19.5px;width:0;display:flex;justify-content:center;top:937.96px;font-family:'Liberation Sans', sans-serif;font-size:16px;line-height:16px;font-weight:700;color:#ffffff;letter-spacing:0px;white-space:pre;"><span style="display:inline-block;white-space:pre;">32</span></div>
<div style="left:19.5px;width:0;display:flex;justify-content:center;top:983.96px;font-family:'Liberation Sans', sans-serif;font-size:16px;line-height:16px;font-weight:700;color:#ffffff;letter-spacing:0px;white-space:pre;"><span style="display:inline-block;white-space:pre;">33</span></div>
<div style="left:19.5px;width:0;display:flex;justify-content:center;top:1029.96px;font-family:'Liberation Sans', sans-serif;font-size:16px;line-height:16px;font-weight:700;color:#ffffff;letter-spacing:0px;white-space:pre;"><span style="display:inline-block;white-space:pre;">34</span></div>
<div style="left:19.5px;width:0;display:flex;justify-content:center;top:1081.96px;font-family:'Liberation Sans', sans-serif;font-size:16px;line-height:16px;font-weight:700;color:#ffffff;letter-spacing:0px;white-space:pre;"><span style="display:inline-block;white-space:pre;">35</span></div>
<div style="left:19.5px;width:0;display:flex;justify-content:center;top:1133.96px;font-family:'Liberation Sans', sans-serif;font-size:16px;line-height:16px;font-weight:700;color:#ffffff;letter-spacing:0px;white-space:pre;"><span style="display:inline-block;white-space:pre;">36</span></div>
<div style="left:19.5px;width:0;display:flex;justify-content:center;top:1185.96px;font-family:'Liberation Sans', sans-serif;font-size:16px;line-height:16px;font-weight:700;color:#ffffff;letter-spacing:0px;white-space:pre;"><span style="display:inline-block;white-space:pre;">37</span></div>
<div style="left:19.5px;width:0;display:flex;justify-content:center;top:1237.96px;font-family:'Liberation Sans', sans-serif;font-size:16px;line-height:16px;font-weight:700;color:#ffffff;letter-spacing:0px;white-space:pre;"><span style="display:inline-block;white-space:pre;">38</span></div>
<div style="left:19.5px;width:0;display:flex;justify-content:center;top:1289.96px;font-family:'Liberation Sans', sans-serif;font-size:16px;line-height:16px;font-weight:700;color:#ffffff;letter-spacing:0px;white-space:pre;"><span style="display:inline-block;white-space:pre;">39</span></div>
<div style="left:19.5px;width:0;display:flex;justify-content:center;top:1341.96px;font-family:'Liberation Sans', sans-serif;font-size:16px;line-height:16px;font-weight:700;color:#ffffff;letter-spacing:0px;white-space:pre;"><span style="display:inline-block;white-space:pre;">40</span></div>
<div style="left:0px;top:354px;width:2px;height:1006px;background:#3c3c3c;"></div>
<div style="left:0px;top:1360px;width:2560px;height:37px;background:#333333;"></div>
<div style="left:0px;top:1360px;width:2560px;height:2px;background:#5f5f5f;"></div>
<svg style="left:28px;top:1376px;" width="64" height="22" viewBox="0 0 64 22"><path d="M16 2 V24 L2 13Z" fill="#6c6c6c"/><path d="M48 2 V24 L62 13Z" fill="#6c6c6c"/></svg>
<div style="left:121px;top:1362px;width:1px;height:35px;background:#666;"></div>
<div style="left:122px;top:1360px;width:284px;height:37px;background:#ffffff;"></div>
<div style="left:160px;top:1373.38px;font-family:'Liberation Sans', sans-serif;font-size:24px;line-height:24px;font-weight:700;color:#217a4c;letter-spacing:0.05px;white-space:pre;"><span style="display:inline-block;white-space:pre;">Regular Employee</span></div>
<div style="left:406px;top:1361px;width:311px;height:36px;background:#212121;border-top:2px solid #676767;border-left:1px solid #5a5a5a;box-sizing:border-box;"></div>
<div style="left:446.8px;top:1372.54px;font-family:'Liberation Sans', sans-serif;font-size:25px;line-height:25px;font-weight:400;color:#8a8a8a;letter-spacing:-0.2px;white-space:pre;-webkit-text-stroke:0.6px #8a8a8a;"><span style="display:inline-block;white-space:pre;">Separated Employee</span></div>
<div style="left:717px;top:1361px;width:76px;height:36px;background:#333333;border-top:2px solid #676767;border-left:1.5px solid #5e5e5e;border-right:1.5px solid #5e5e5e;box-sizing:border-box;"></div>
<svg style="left:744px;top:1375px;" width="24" height="22" viewBox="0 0 24 22"><path d="M11.5 1 V22 M1 11.5 H22" stroke="#bdbdbd" stroke-width="3.6"/></svg>
<div style="left:0px;top:0px;width:2px;height:1397px;background:rgba(255,255,255,0.17);"></div>
<div style="left:2558px;top:0px;width:2px;height:1397px;background:rgba(255,255,255,0.17);"></div></body></html>
